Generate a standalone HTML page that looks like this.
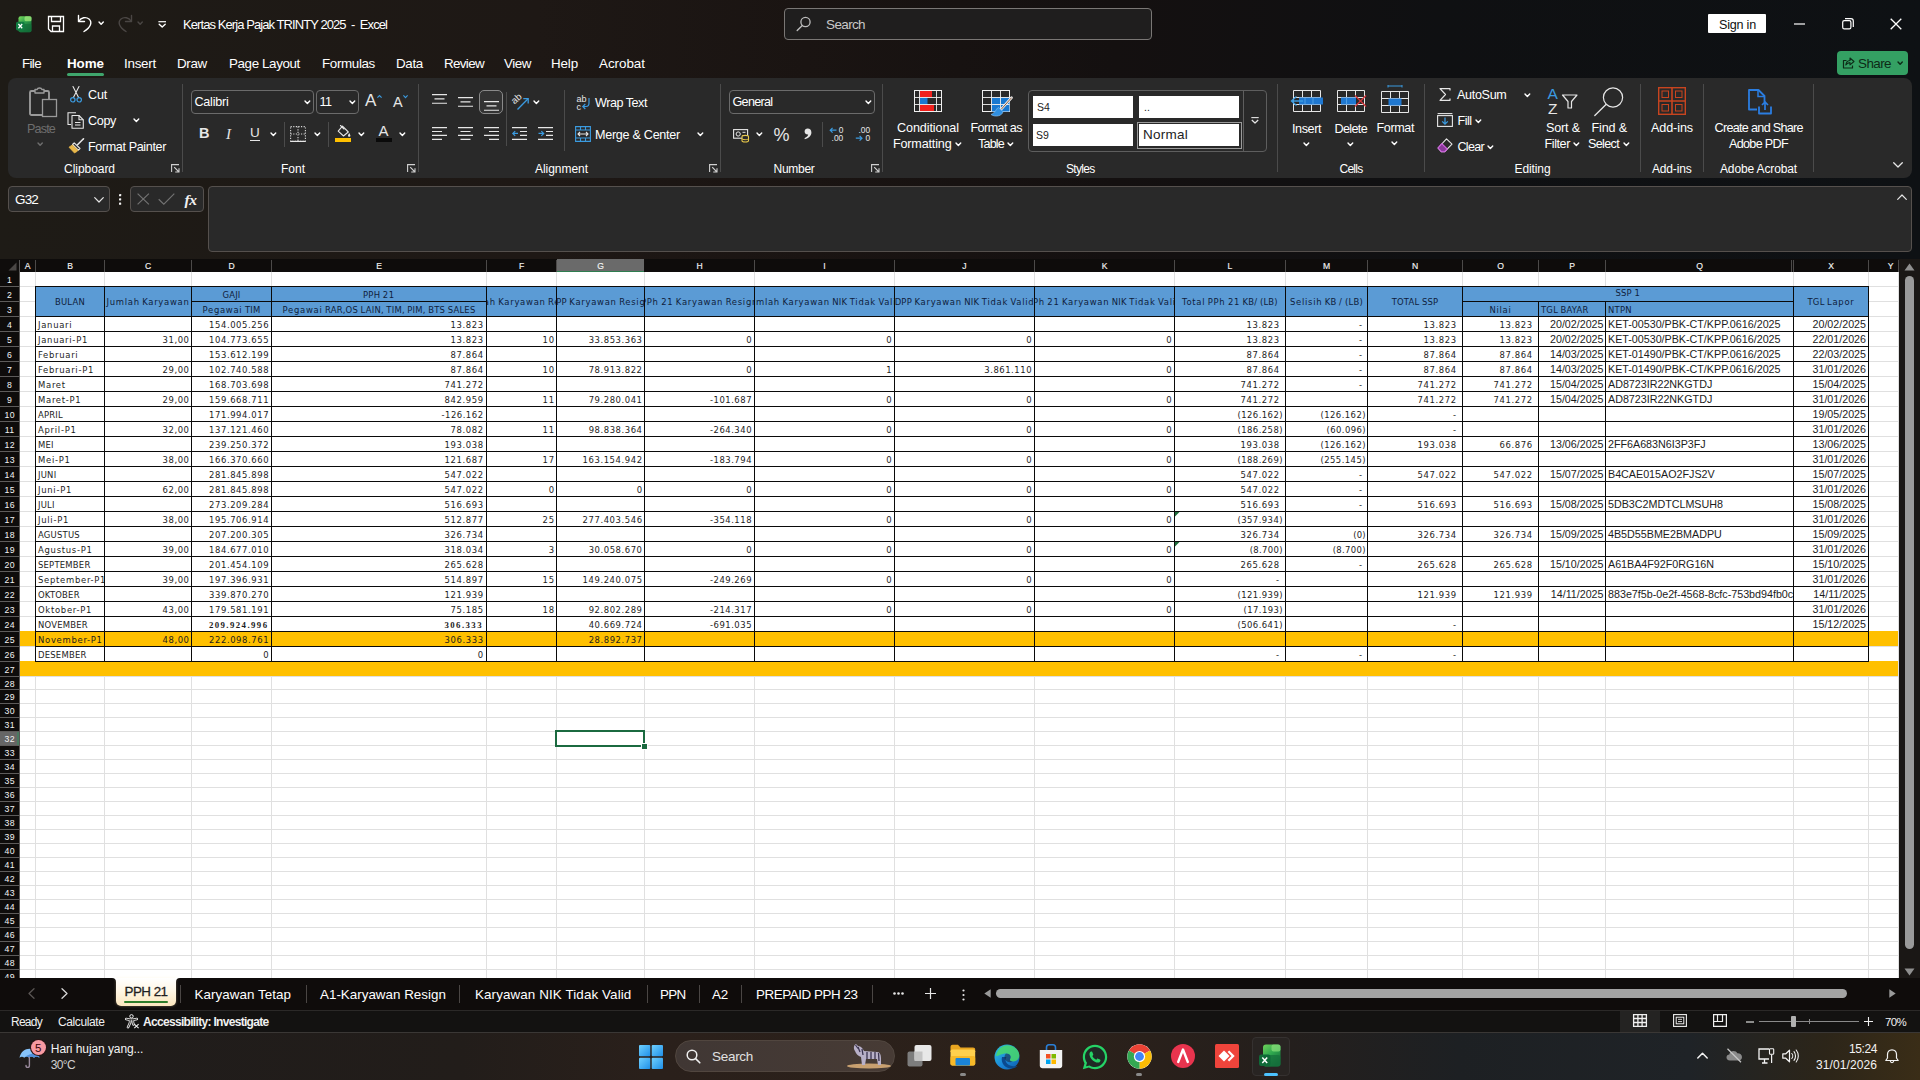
<!DOCTYPE html>
<html lang="id"><head><meta charset="utf-8"><title>Kertas Kerja Pajak TRINTY 2025 - Excel</title>
<style>

html,body{margin:0;padding:0;}
body{width:1920px;height:1080px;overflow:hidden;background:#1e1a17;font-family:"Liberation Sans",sans-serif;color:#fff;}
#app{position:relative;width:1920px;height:1080px;overflow:hidden;background:#1e1a17;}
.abs{position:absolute;}
.t{position:absolute;white-space:pre;line-height:1;color:#fff;}
svg{position:absolute;overflow:visible;}
/* title bar */
#titlebar{position:absolute;left:0;top:0;width:1920px;height:48px;background:#1e1a17;}
#tabsrow{position:absolute;left:0;top:48px;width:1920px;height:30px;}
.tab{position:absolute;top:56px;font-size:14.5px;color:#fff;white-space:nowrap;line-height:16px;}
#ribbon{position:absolute;left:8px;top:78px;width:1904px;height:100px;background:#292929;border-radius:8px;}
.rl{position:absolute;font-size:13px;color:#fff;white-space:nowrap;line-height:14px;}
.gl{position:absolute;font-size:12.5px;color:#fff;white-space:nowrap;line-height:14px;top:161px;}
.sep{position:absolute;width:1px;background:#4a4a4a;top:86px;height:86px;}
.box{position:absolute;border:1px solid #6a6a6a;border-radius:4px;box-sizing:border-box;}
/* grid */
#grid{position:absolute;left:0;top:259px;width:1920px;height:719px;background:#fff;overflow:hidden;}
.ch{position:absolute;top:0;height:13px;background:#0e0c0b;color:#f4f4f4;font-size:8.6px;line-height:14px;text-align:center;-webkit-text-stroke:0.15px #f4f4f4;}
.rh{position:absolute;left:0;width:19px;background:#0e0c0b;color:#f4f4f4;font-size:8.7px;text-align:center;letter-spacing:0.35px;text-indent:0.35px;}
.c{position:absolute;white-space:nowrap;overflow:hidden;font-family:'DejaVu Sans Condensed','Liberation Sans',sans-serif;font-size:10.5px;color:#1a1a1a;box-sizing:border-box;word-spacing:-0.9px;}
.c .u{letter-spacing:0.22px;}.c .p{letter-spacing:-0.19px;}
.vl{position:absolute;width:1px;background:#000;}
.hl{position:absolute;height:1px;background:#000;}
.gv{position:absolute;width:1px;background:#dcdcdc;}
.gh{position:absolute;height:1px;background:#dcdcdc;}

</style></head>
<body>
<div id="app">
<div class="abs" style="left:0;top:0;width:1920px;height:259px;background:linear-gradient(90deg,#1e1b16 0%,#1e1815 28%,#1a1412 42%,#141010 58%,#0f1012 75%,#0e1114 100%);"></div>
<svg style="left:16px;top:15.5px" width="16" height="17" viewBox="0 0 16 17"><defs><linearGradient id="xl" x1="0" y1="0" x2="0.7" y2="1"><stop offset="0" stop-color="#7ddc5c"/><stop offset="0.45" stop-color="#2ea04c"/><stop offset="1" stop-color="#0f6233"/></linearGradient></defs>
<rect x="2.5" y="0.3" width="13" height="16" rx="2" fill="url(#xl)"/>
<rect x="8.5" y="0.3" width="7" height="5" rx="1.5" fill="#a6ec7c" opacity="0.75"/>
<rect x="2.5" y="8" width="13" height="8.3" rx="1.8" fill="#14703a" opacity="0.7"/>
<rect x="0" y="5.8" width="8.6" height="8.6" rx="1.6" fill="#107c41"/>
<path d="M2.4 8 L6.2 12.2 M6.2 8 L2.4 12.2" stroke="#fff" stroke-width="1.3" fill="none"/></svg>
<svg style="left:47px;top:15px" width="18" height="18" viewBox="0 0 18 18"><path d="M1.5 1.5 H16.5 V16.5 H4 L1.5 14 Z" fill="none" stroke="#fff" stroke-width="1.3" stroke-linejoin="miter"/>
<path d="M4.5 1.5 V6.5 H13.5 V1.5 M5.5 16.5 V11 H12.5 V16.5" fill="none" stroke="#fff" stroke-width="1.3"/></svg>
<svg style="left:77px;top:14px" width="16" height="19" viewBox="0 0 16 19"><path d="M1.5 1.5 V7.5 H7.5" fill="none" stroke="#fff" stroke-width="1.4" stroke-linecap="round" stroke-linejoin="round"/>
<path d="M2 7 C4 3.5 9 2.5 12 5 C15.5 8 14 13 7 17.5" fill="none" stroke="#fff" stroke-width="1.4" stroke-linecap="round"/></svg>
<svg style="left:99.3px;top:22.3px" width="4.3" height="2.3400000000000003" viewBox="0 0 4.3 2.3400000000000003"><path d="M0 0 L2.15 2.3400000000000003 L4.3 0" fill="none" stroke="#fff" stroke-width="1.4" stroke-linecap="round" stroke-linejoin="round"/></svg>
<svg style="left:117px;top:14px" width="16" height="19" viewBox="0 0 16 19"><path d="M14.5 1.5 V7.5 H8.5" fill="none" stroke="#4a4644" stroke-width="1.4" stroke-linecap="round" stroke-linejoin="round"/>
<path d="M14 7 C12 3.5 7 2.5 4 5 C0.5 8 2 13 9 17.5" fill="none" stroke="#4a4644" stroke-width="1.4" stroke-linecap="round"/></svg>
<svg style="left:138.3px;top:22.3px" width="4.3" height="2.3400000000000003" viewBox="0 0 4.3 2.3400000000000003"><path d="M0 0 L2.15 2.3400000000000003 L4.3 0" fill="none" stroke="#4a4644" stroke-width="1.4" stroke-linecap="round" stroke-linejoin="round"/></svg>
<svg style="left:158.3px;top:20.8px" width="8.4" height="7" viewBox="0 0 8.4 7"><path d="M0.4 0.7 H8" stroke="#fff" stroke-width="1.2"/><path d="M1.2 3.2 L4.2 6 L7.2 3.2" fill="none" stroke="#fff" stroke-width="1.4" stroke-linejoin="round" stroke-linecap="round"/></svg>
<div class="t" style="left:183.0px;top:17.3px;font-size:13px;line-height:16px;letter-spacing:-0.921px;">Kertas Kerja Pajak TRINTY 2025  -  Excel</div>
<div class="abs" style="left:784px;top:8px;width:368px;height:32px;box-sizing:border-box;border:1px solid #7a7775;border-radius:4px;background:#1f1e1e;"></div>
<svg style="left:796px;top:16px" width="16" height="16" viewBox="0 0 16 16"><circle cx="9.5" cy="6" r="4.6" fill="none" stroke="#bdbdbd" stroke-width="1.3"/><path d="M6.3 9.5 L1.2 14.6" stroke="#bdbdbd" stroke-width="1.4" stroke-linecap="round"/></svg>
<div class="t" style="left:826.0px;top:17.4px;font-size:13.5px;line-height:16px;letter-spacing:-0.629px;color:#c8c8c8;">Search</div>
<div class="abs" style="left:1708px;top:14px;width:58px;height:19px;background:#fff;border-radius:1px;"></div>
<div class="t" style="left:1719.0px;top:17.8px;font-size:12.6px;line-height:15px;letter-spacing:-0.218px;color:#111;">Sign in</div>
<svg style="left:1794px;top:22.5px" width="11" height="2" viewBox="0 0 11 2"><path d="M0 1 H11" stroke="#fff" stroke-width="1.2"/></svg>
<svg style="left:1842px;top:18px" width="12" height="12" viewBox="0 0 12 12"><rect x="0.7" y="2.7" width="8.2" height="8.2" rx="1.6" fill="none" stroke="#fff" stroke-width="1.2"/><path d="M3 0.7 H9 Q11.3 0.7 11.3 3 V9" fill="none" stroke="#fff" stroke-width="1.2"/></svg>
<svg style="left:1890px;top:18px" width="12" height="12" viewBox="0 0 12 12"><path d="M0.7 0.7 L11.3 11.3 M11.3 0.7 L0.7 11.3" stroke="#fff" stroke-width="1.3"/></svg>
<div class="t" style="left:22.0px;top:56.2px;font-size:13.4px;line-height:16px;letter-spacing:-0.648px;">File</div>
<div class="t" style="left:67.0px;top:56.2px;font-size:13.4px;line-height:16px;letter-spacing:-0.058px;font-weight:bold;">Home</div>
<div class="t" style="left:124.0px;top:56.2px;font-size:13.4px;line-height:16px;letter-spacing:-0.252px;">Insert</div>
<div class="t" style="left:177.0px;top:56.2px;font-size:13.4px;line-height:16px;letter-spacing:-0.318px;">Draw</div>
<div class="t" style="left:229.0px;top:56.2px;font-size:13.4px;line-height:16px;letter-spacing:-0.387px;">Page Layout</div>
<div class="t" style="left:322.0px;top:56.2px;font-size:13.4px;line-height:16px;letter-spacing:-0.356px;">Formulas</div>
<div class="t" style="left:396.0px;top:56.2px;font-size:13.4px;line-height:16px;letter-spacing:-0.326px;">Data</div>
<div class="t" style="left:444.0px;top:56.2px;font-size:13.4px;line-height:16px;letter-spacing:-0.656px;">Review</div>
<div class="t" style="left:504.0px;top:56.2px;font-size:13.4px;line-height:16px;letter-spacing:-0.451px;">View</div>
<div class="t" style="left:551.0px;top:56.2px;font-size:13.4px;line-height:16px;letter-spacing:-0.140px;">Help</div>
<div class="t" style="left:599.0px;top:56.2px;font-size:13.4px;line-height:16px;letter-spacing:-0.026px;">Acrobat</div>
<div class="abs" style="left:67px;top:73px;width:37px;height:2.5px;background:#3fa56c;border-radius:1.5px;"></div>
<div class="abs" style="left:1837px;top:51px;width:71px;height:24px;background:#34a063;border-radius:4px;"></div>
<svg style="left:1842px;top:56px" width="13" height="13" viewBox="0 0 13 13"><path d="M4.5 4.5 H1.5 V12 H10.5 V9.5" fill="none" stroke="#0d2a17" stroke-width="1.2" stroke-linejoin="round"/><path d="M3.8 9 C4.2 6 6 4.6 8 4.5 V2 L12 5.5 L8 8.8 V6.6 C6.3 6.6 5 7.3 3.8 9 Z" fill="none" stroke="#0d2a17" stroke-width="1.1" stroke-linejoin="round"/></svg>
<div class="t" style="left:1858.0px;top:56.2px;font-size:13.4px;line-height:16px;letter-spacing:-0.552px;color:#0d2a17;">Share</div>
<svg style="left:1898.3px;top:62.3px" width="4.3" height="2.3400000000000003" viewBox="0 0 4.3 2.3400000000000003"><path d="M0 0 L2.15 2.3400000000000003 L4.3 0" fill="none" stroke="#0d2a17" stroke-width="1.4" stroke-linecap="round" stroke-linejoin="round"/></svg>
<div id="ribbon"></div>
<svg style="left:29px;top:87px" width="29" height="31" viewBox="0 0 29 31"><rect x="1" y="4" width="19" height="24" rx="1.5" fill="none" stroke="#9a9a9a" stroke-width="1.9"/>
<path d="M6 4 V2.5 H8.2 C8.5 0.5 12.5 0.5 12.8 2.5 H15 V6 H6 Z" fill="#292929" stroke="#9a9a9a" stroke-width="1.4" stroke-linejoin="round"/>
<rect x="13.5" y="12.5" width="14" height="17" fill="#292929" stroke="#9a9a9a" stroke-width="1.3"/></svg>
<div class="t" style="left:27.0px;top:122.3px;font-size:12.6px;line-height:15px;letter-spacing:-0.844px;color:#6e6e6e;">Paste</div>
<svg style="left:38.4px;top:143.3px" width="4.3" height="2.3400000000000003" viewBox="0 0 4.3 2.3400000000000003"><path d="M0 0 L2.15 2.3400000000000003 L4.3 0" fill="none" stroke="#6e6e6e" stroke-width="1.4" stroke-linecap="round" stroke-linejoin="round"/></svg>
<svg style="left:70px;top:86px" width="12" height="17" viewBox="0 0 12 17"><path d="M3 0.5 L8.6 11.5 M9 0.5 L3.4 11.5" stroke="#e6e6e6" stroke-width="1.1" stroke-linecap="round"/>
<circle cx="2.8" cy="13.8" r="2.2" fill="none" stroke="#3b9be0" stroke-width="1.2"/><circle cx="9.2" cy="13.8" r="2.2" fill="none" stroke="#3b9be0" stroke-width="1.2"/></svg>
<div class="t" style="left:88.0px;top:88.3px;font-size:12.6px;line-height:15px;letter-spacing:-0.203px;">Cut</div>
<svg style="left:67px;top:112px" width="18" height="17" viewBox="0 0 18 17"><path d="M4 12.5 H1 V0.8 H9" fill="none" stroke="#e6e6e6" stroke-width="1.1"/>
<path d="M5 3.5 H12 L16.3 7.8 V16.2 H5 Z" fill="none" stroke="#e6e6e6" stroke-width="1.1" stroke-linejoin="round"/><path d="M12 3.5 V7.8 H16.3" fill="none" stroke="#e6e6e6" stroke-width="1.1"/>
<path d="M8 10.5 H13.5 M8 13 H13.5" stroke="#e6e6e6" stroke-width="1"/></svg>
<div class="t" style="left:88.0px;top:114.3px;font-size:12.6px;line-height:15px;letter-spacing:-0.354px;">Copy</div>
<svg style="left:133.9px;top:119.2px" width="4.7299999999999995" height="2.52" viewBox="0 0 4.7299999999999995 2.52"><path d="M0 0 L2.3649999999999998 2.52 L4.7299999999999995 0" fill="none" stroke="#fff" stroke-width="1.4" stroke-linecap="round" stroke-linejoin="round"/></svg>
<svg style="left:68px;top:138px" width="17" height="16" viewBox="0 0 17 16"><path d="M15.5 0.8 L9.5 6.8" stroke="#e6e6e6" stroke-width="1.6" stroke-linecap="round"/>
<path d="M6.2 4.8 L12 10.5 L10.3 12.2 L4.5 6.5 Z" fill="#292929" stroke="#e6e6e6" stroke-width="1.1" stroke-linejoin="round"/>
<path d="M4.3 7 L1 9.2 L6.5 15 C8.3 14 9.6 13 10 12.4 Z" fill="#e8b84a" stroke="#e8b84a" stroke-width="0.8" stroke-linejoin="round"/></svg>
<div class="t" style="left:88.0px;top:139.8px;font-size:12.6px;line-height:15px;letter-spacing:-0.381px;">Format Painter</div>
<div class="t" style="left:64.0px;top:161.8px;font-size:12px;line-height:14px;letter-spacing:-0.041px;">Clipboard</div>
<svg style="left:171px;top:164px" width="9" height="9" viewBox="0 0 9 9"><path d="M0.6 8 V0.6 H8" fill="none" stroke="#d0d0d0" stroke-width="1.1"/><path d="M3.2 3.2 L8 8 M8 4.2 V8 H4.2" fill="none" stroke="#d0d0d0" stroke-width="1.1"/></svg>
<div class="abs" style="left:182px;top:84px;width:1px;height:88px;background:#4b4b4b;"></div>
<div class="abs" style="left:191px;top:90px;width:122.5px;height:24px;box-sizing:border-box;border:1px solid #6b6b6b;border-radius:4px;background:#292929;"></div>
<div class="t" style="left:194.5px;top:95.3px;font-size:12.6px;line-height:15px;letter-spacing:-0.244px;">Calibri</div>
<svg style="left:304.6px;top:101.2px" width="4.7299999999999995" height="2.52" viewBox="0 0 4.7299999999999995 2.52"><path d="M0 0 L2.3649999999999998 2.52 L4.7299999999999995 0" fill="none" stroke="#fff" stroke-width="1.4" stroke-linecap="round" stroke-linejoin="round"/></svg>
<div class="abs" style="left:316px;top:90px;width:43px;height:24px;box-sizing:border-box;border:1px solid #6b6b6b;border-radius:4px;background:#292929;"></div>
<div class="t" style="left:319.5px;top:95.3px;font-size:12.6px;line-height:15px;letter-spacing:-0.540px;">11</div>
<svg style="left:349.6px;top:101.2px" width="4.7299999999999995" height="2.52" viewBox="0 0 4.7299999999999995 2.52"><path d="M0 0 L2.3649999999999998 2.52 L4.7299999999999995 0" fill="none" stroke="#fff" stroke-width="1.4" stroke-linecap="round" stroke-linejoin="round"/></svg>
<div class="t" style="left:365.0px;top:91.4px;font-size:17px;line-height:20px;color:#e6e6e6;">A</div>
<svg style="left:376.5px;top:94.5px" width="5" height="3" viewBox="0 0 5 3"><path d="M0.4 2.7 L2.5 0.5 L4.6 2.7" fill="none" stroke="#3b9be0" stroke-width="1.1"/></svg>
<div class="t" style="left:393.0px;top:93.9px;font-size:14.5px;line-height:17px;color:#e6e6e6;">A</div>
<svg style="left:402.5px;top:94.5px" width="5" height="3" viewBox="0 0 5 3"><path d="M0.4 0.4 L2.5 2.6 L4.6 0.4" fill="none" stroke="#3b9be0" stroke-width="1.1"/></svg>
<div class="t" style="left:199.0px;top:125.4px;font-size:14.5px;line-height:17px;color:#e6e6e6;font-weight:bold;">B</div>
<div class="t" style="left:226.0px;top:124.9px;font-size:15px;line-height:18px;color:#e6e6e6;font-style:italic;font-family:'Liberation Serif',serif;">I</div>
<div class="t" style="left:250.0px;top:125.4px;font-size:13.5px;line-height:16px;color:#e6e6e6;">U</div>
<div class="abs" style="left:250px;top:139.5px;width:9.5px;height:1.2px;background:#e6e6e6;"></div>
<svg style="left:271.1px;top:133.2px" width="4.7299999999999995" height="2.52" viewBox="0 0 4.7299999999999995 2.52"><path d="M0 0 L2.3649999999999998 2.52 L4.7299999999999995 0" fill="none" stroke="#fff" stroke-width="1.4" stroke-linecap="round" stroke-linejoin="round"/></svg>
<div class="abs" style="left:284px;top:122px;width:1px;height:25px;background:#4b4b4b;"></div>
<svg style="left:290px;top:126px" width="16" height="16" viewBox="0 0 16 16"><path d="M0.6 0.6 H15.4 V15.4 H0.6 Z M8 0.6 V15.4 M0.6 8 H15.4" fill="none" stroke="#d8d8d8" stroke-width="1.1" stroke-dasharray="1.2 1.4"/>
<path d="M0.6 15.4 H15.4" stroke="#e6e6e6" stroke-width="1.2"/></svg>
<svg style="left:314.6px;top:133.2px" width="4.7299999999999995" height="2.52" viewBox="0 0 4.7299999999999995 2.52"><path d="M0 0 L2.3649999999999998 2.52 L4.7299999999999995 0" fill="none" stroke="#fff" stroke-width="1.4" stroke-linecap="round" stroke-linejoin="round"/></svg>
<div class="abs" style="left:328px;top:122px;width:1px;height:25px;background:#4b4b4b;"></div>
<svg style="left:336px;top:125px" width="15" height="12" viewBox="0 0 15 12"><path d="M6.5 1.2 L12.3 7 L7.5 11 L2.2 6.2 Z" fill="none" stroke="#e6e6e6" stroke-width="1.1" stroke-linejoin="round"/><path d="M4.5 0.5 L8 4" stroke="#e6e6e6" stroke-width="1.1" stroke-linecap="round"/>
<path d="M13.2 8 C13.8 9.2 14.4 10 14.4 10.8 C14.4 12.2 12 12.2 12 10.8 C12 10 12.6 9.2 13.2 8 Z" fill="#e6e6e6"/></svg>
<div class="abs" style="left:335px;top:138px;width:16px;height:4px;background:#ffc000;"></div>
<svg style="left:359.1px;top:133.2px" width="4.7299999999999995" height="2.52" viewBox="0 0 4.7299999999999995 2.52"><path d="M0 0 L2.3649999999999998 2.52 L4.7299999999999995 0" fill="none" stroke="#fff" stroke-width="1.4" stroke-linecap="round" stroke-linejoin="round"/></svg>
<div class="t" style="left:378.5px;top:122.4px;font-size:15px;line-height:18px;color:#e6e6e6;">A</div>
<div class="abs" style="left:376px;top:138px;width:15.5px;height:4px;background:#0a0a0a;"></div>
<svg style="left:400.1px;top:133.2px" width="4.7299999999999995" height="2.52" viewBox="0 0 4.7299999999999995 2.52"><path d="M0 0 L2.3649999999999998 2.52 L4.7299999999999995 0" fill="none" stroke="#fff" stroke-width="1.4" stroke-linecap="round" stroke-linejoin="round"/></svg>
<div class="t" style="left:281.0px;top:161.8px;font-size:12px;line-height:14px;">Font</div>
<svg style="left:407px;top:164px" width="9" height="9" viewBox="0 0 9 9"><path d="M0.6 8 V0.6 H8" fill="none" stroke="#d0d0d0" stroke-width="1.1"/><path d="M3.2 3.2 L8 8 M8 4.2 V8 H4.2" fill="none" stroke="#d0d0d0" stroke-width="1.1"/></svg>
<div class="abs" style="left:418px;top:84px;width:1px;height:88px;background:#4b4b4b;"></div>
<svg style="left:431.5px;top:93.6px" width="16" height="14" viewBox="0 0 16 14"><path d="M0 0.60 H15 M2.5 4.90 H12.5 M0 9.20 H15 " stroke="#e6e6e6" stroke-width="1.15" fill="none"/></svg>
<svg style="left:457.5px;top:97.2px" width="16" height="14" viewBox="0 0 16 14"><path d="M0 0.60 H15 M2.5 4.90 H12.5 M0 9.20 H15 " stroke="#e6e6e6" stroke-width="1.15" fill="none"/></svg>
<div class="abs" style="left:479px;top:90px;width:24px;height:24px;box-sizing:border-box;border:1px solid #8a8a8a;border-radius:5px;background:#333;"></div>
<svg style="left:483.5px;top:100.6px" width="16" height="14" viewBox="0 0 16 14"><path d="M0 0.60 H15 M2.5 4.90 H12.5 M0 9.20 H15 " stroke="#e6e6e6" stroke-width="1.15" fill="none"/></svg>
<div class="abs" style="left:506px;top:92px;width:1px;height:54px;background:#4b4b4b;"></div>
<svg style="left:511.5px;top:93px" width="18" height="18" viewBox="0 0 18 18"><text x="2.5" y="11.5" font-size="9.5" fill="#e6e6e6" font-family="Liberation Sans" transform="rotate(-42 2.5 11.5)">ab</text>
<path d="M5.5 16.5 L15.8 6" stroke="#3b9be0" stroke-width="1.3" fill="none"/><path d="M11.3 5.6 H16.2 V10.5" stroke="#3b9be0" stroke-width="1.3" fill="none"/></svg>
<svg style="left:533.9px;top:101.2px" width="4.7299999999999995" height="2.52" viewBox="0 0 4.7299999999999995 2.52"><path d="M0 0 L2.3649999999999998 2.52 L4.7299999999999995 0" fill="none" stroke="#fff" stroke-width="1.4" stroke-linecap="round" stroke-linejoin="round"/></svg>
<div class="abs" style="left:564px;top:90px;width:1px;height:61px;background:#4b4b4b;"></div>
<svg style="left:576px;top:94px" width="16" height="17" viewBox="0 0 16 17"><text x="0.5" y="7.5" font-size="9" fill="#e6e6e6" font-family="Liberation Sans">ab</text>
<text x="0.5" y="15.5" font-size="9" fill="#e6e6e6" font-family="Liberation Sans">c</text>
<path d="M13 4 V9 Q13 12.5 10 12.5 H7" stroke="#3b9be0" stroke-width="1.2" fill="none"/><path d="M9.3 10 L6.8 12.5 L9.3 15" stroke="#3b9be0" stroke-width="1.2" fill="none"/></svg>
<div class="t" style="left:595.0px;top:95.8px;font-size:12.6px;line-height:15px;letter-spacing:-0.473px;">Wrap Text</div>
<svg style="left:431.5px;top:127.2px" width="16" height="14" viewBox="0 0 16 14"><path d="M0 0.60 H15 M0 4.50 H10 M0 8.40 H15 M0 12.30 H10 " stroke="#e6e6e6" stroke-width="1.15" fill="none"/></svg>
<svg style="left:457.5px;top:127.2px" width="16" height="14" viewBox="0 0 16 14"><path d="M0 0.60 H15 M2.5 4.50 H12.5 M0 8.40 H15 M2.5 12.30 H12.5 " stroke="#e6e6e6" stroke-width="1.15" fill="none"/></svg>
<svg style="left:483.5px;top:127.2px" width="16" height="14" viewBox="0 0 16 14"><path d="M0 0.60 H15 M5 4.50 H15 M0 8.40 H15 M5 12.30 H15 " stroke="#e6e6e6" stroke-width="1.15" fill="none"/></svg>
<svg style="left:512px;top:127.2px" width="16" height="14" viewBox="0 0 16 14"><path d="M0 0.6 H15 M8 4.5 H15 M8 8.4 H15 M0 12.3 H15" stroke="#e6e6e6" stroke-width="1.15"/>
<path d="M6 6.45 H0.8 M3.2 4.05 L0.8 6.45 L3.2 8.85" stroke="#3b9be0" stroke-width="1.2" fill="none"/></svg>
<svg style="left:538px;top:127.2px" width="16" height="14" viewBox="0 0 16 14"><path d="M0 0.6 H15 M8 4.5 H15 M8 8.4 H15 M0 12.3 H15" stroke="#e6e6e6" stroke-width="1.15"/>
<path d="M0.5 6.45 H5.7 M3.3 4.05 L5.7 6.45 L3.3 8.85" stroke="#3b9be0" stroke-width="1.2" fill="none"/></svg>
<svg style="left:575px;top:126px" width="16" height="16" viewBox="0 0 16 16"><path d="M0.6 0.6 H15.4 V15.4 H0.6 Z M0.6 4 H15.4 M0.6 12 H15.4 M5.5 0.6 V4 M10.5 0.6 V4 M5.5 12 V15.4 M10.5 12 V15.4" fill="none" stroke="#3b9be0" stroke-width="1.1"/>
<path d="M3 8 H13 M5 6 L3 8 L5 10 M11 6 L13 8 L11 10" fill="none" stroke="#e6e6e6" stroke-width="1.1"/></svg>
<div class="t" style="left:595.0px;top:127.8px;font-size:12.6px;line-height:15px;letter-spacing:-0.282px;">Merge &amp; Center</div>
<svg style="left:698.1px;top:133.2px" width="4.7299999999999995" height="2.52" viewBox="0 0 4.7299999999999995 2.52"><path d="M0 0 L2.3649999999999998 2.52 L4.7299999999999995 0" fill="none" stroke="#fff" stroke-width="1.4" stroke-linecap="round" stroke-linejoin="round"/></svg>
<div class="t" style="left:535.0px;top:161.8px;font-size:12px;line-height:14px;letter-spacing:-0.040px;">Alignment</div>
<svg style="left:709px;top:164px" width="9" height="9" viewBox="0 0 9 9"><path d="M0.6 8 V0.6 H8" fill="none" stroke="#d0d0d0" stroke-width="1.1"/><path d="M3.2 3.2 L8 8 M8 4.2 V8 H4.2" fill="none" stroke="#d0d0d0" stroke-width="1.1"/></svg>
<div class="abs" style="left:720px;top:84px;width:1px;height:88px;background:#4b4b4b;"></div>
<div class="abs" style="left:729px;top:90px;width:146px;height:24px;box-sizing:border-box;border:1px solid #6b6b6b;border-radius:4px;background:#292929;"></div>
<div class="t" style="left:732.5px;top:95.3px;font-size:12.6px;line-height:15px;letter-spacing:-0.690px;">General</div>
<svg style="left:865.6px;top:101.2px" width="4.7299999999999995" height="2.52" viewBox="0 0 4.7299999999999995 2.52"><path d="M0 0 L2.3649999999999998 2.52 L4.7299999999999995 0" fill="none" stroke="#fff" stroke-width="1.4" stroke-linecap="round" stroke-linejoin="round"/></svg>
<svg style="left:733px;top:128px" width="17" height="15" viewBox="0 0 17 15"><rect x="0.6" y="1.6" width="14" height="8.6" fill="none" stroke="#e6e6e6" stroke-width="1.1"/><circle cx="5.2" cy="6" r="2.1" fill="none" stroke="#e6e6e6" stroke-width="1"/><path d="M9.5 4.3 H12.5 M9.5 7.5 H12.5" stroke="#e6e6e6" stroke-width="1"/>
<path d="M9 8.5 C9 7 15.5 7 15.5 8.5 V12.8 C15.5 14.4 9 14.4 9 12.8 Z" fill="#292929" stroke="#e8c84a" stroke-width="1.1"/><path d="M9 10.6 C9 12 15.5 12 15.5 10.6" fill="none" stroke="#e8c84a" stroke-width="1"/></svg>
<svg style="left:757.1px;top:133.2px" width="4.7299999999999995" height="2.52" viewBox="0 0 4.7299999999999995 2.52"><path d="M0 0 L2.3649999999999998 2.52 L4.7299999999999995 0" fill="none" stroke="#fff" stroke-width="1.4" stroke-linecap="round" stroke-linejoin="round"/></svg>
<div class="t" style="left:773.5px;top:123.9px;font-size:18px;line-height:22px;color:#e6e6e6;">%</div>
<svg style="left:803px;top:128px" width="9" height="12" viewBox="0 0 9 12"><path d="M4.6 0.6 C7 0.6 8.4 2.2 8.4 4.4 C8.4 7.6 5.8 10.2 1.8 11.2 L1.5 10.2 C3.8 9.2 5 8 5.2 6.6 C3.2 6.8 1.6 5.6 1.6 3.6 C1.6 1.8 2.9 0.6 4.6 0.6 Z" fill="#e6e6e6"/></svg>
<div class="abs" style="left:822px;top:122px;width:1px;height:25px;background:#4b4b4b;"></div>
<svg style="left:829px;top:126px" width="17" height="17" viewBox="0 0 17 17"><path d="M7.5 4.2 H1.2 M3.6 1.8 L1.2 4.2 L3.6 6.6" fill="none" stroke="#3b9be0" stroke-width="1.2"/>
<text x="9.8" y="7.2" font-size="8.4" fill="#e6e6e6" font-family="Liberation Sans">0</text><text x="2.6" y="15.4" font-size="8.4" fill="#e6e6e6" font-family="Liberation Sans">.00</text></svg>
<svg style="left:855px;top:126px" width="17" height="17" viewBox="0 0 17 17"><path d="M0.8 12.2 H7 M4.6 9.8 L7 12.2 L4.6 14.6" fill="none" stroke="#3b9be0" stroke-width="1.2"/>
<text x="3.4" y="7.2" font-size="8.4" fill="#e6e6e6" font-family="Liberation Sans">.00</text><text x="10.6" y="15.4" font-size="8.4" fill="#e6e6e6" font-family="Liberation Sans">0</text></svg>
<div class="t" style="left:773.5px;top:161.8px;font-size:12px;line-height:14px;letter-spacing:-0.280px;">Number</div>
<svg style="left:871px;top:164px" width="9" height="9" viewBox="0 0 9 9"><path d="M0.6 8 V0.6 H8" fill="none" stroke="#d0d0d0" stroke-width="1.1"/><path d="M3.2 3.2 L8 8 M8 4.2 V8 H4.2" fill="none" stroke="#d0d0d0" stroke-width="1.1"/></svg>
<div class="abs" style="left:882px;top:84px;width:1px;height:88px;background:#4b4b4b;"></div>
<svg style="left:914px;top:90px" width="28" height="22" viewBox="0 0 28 22"><rect x="0.5" y="0.5" width="27" height="21" fill="#292929" stroke="#f0f0f0" stroke-width="1"/>
<rect x="5.5" y="1" width="12.5" height="6.5" fill="#f0201c"/><rect x="5.5" y="14.5" width="14.5" height="6.5" fill="#f0201c"/><rect x="5.5" y="7.5" width="8" height="7" fill="#1878d0"/>
<path d="M5.5 0.5 V21.5 M22.5 0.5 V21.5 M0.5 7.5 H27.5 M0.5 14.5 H27.5" stroke="#f0f0f0" stroke-width="0.9" fill="none"/></svg>
<div class="t" style="left:897.0px;top:121.3px;font-size:12.6px;line-height:15px;letter-spacing:-0.095px;">Conditional</div>
<div class="t" style="left:893.0px;top:137.3px;font-size:12.6px;line-height:15px;letter-spacing:-0.172px;">Formatting</div>
<svg style="left:956.1px;top:143.2px" width="4.7299999999999995" height="2.52" viewBox="0 0 4.7299999999999995 2.52"><path d="M0 0 L2.3649999999999998 2.52 L4.7299999999999995 0" fill="none" stroke="#fff" stroke-width="1.4" stroke-linecap="round" stroke-linejoin="round"/></svg>
<svg style="left:982px;top:90px" width="31" height="28" viewBox="0 0 31 28"><rect x="0.5" y="0.5" width="27" height="21" fill="#292929" stroke="#f0f0f0" stroke-width="1"/>
<rect x="9.5" y="7.5" width="18" height="14" fill="#1878d0"/>
<path d="M9.5 0.5 V21.5 M18.5 0.5 V21.5 M0.5 7.5 H27.5 M0.5 14.5 H27.5" stroke="#f0f0f0" stroke-width="0.9" fill="none"/>
<path d="M29.6 7.6 L18.5 20" stroke="#f0f0f0" stroke-width="2.6" stroke-linecap="round"/><path d="M29.3 8 L19.5 19" stroke="#7a4a2a" stroke-width="0.9" stroke-linecap="round"/>
<path d="M16.5 17.5 C14 18.5 13.5 23 9 24.5 C13 27.5 20.5 26 21 21.5 Z" fill="#2f8fe0" stroke="#8cc4f4" stroke-width="0.6"/></svg>
<div class="t" style="left:970.5px;top:121.3px;font-size:12.6px;line-height:15px;letter-spacing:-0.579px;">Format as</div>
<div class="t" style="left:978.0px;top:137.3px;font-size:12.6px;line-height:15px;letter-spacing:-0.825px;">Table</div>
<svg style="left:1008.1px;top:143.2px" width="4.7299999999999995" height="2.52" viewBox="0 0 4.7299999999999995 2.52"><path d="M0 0 L2.3649999999999998 2.52 L4.7299999999999995 0" fill="none" stroke="#fff" stroke-width="1.4" stroke-linecap="round" stroke-linejoin="round"/></svg>
<div class="abs" style="left:1028px;top:90px;width:239px;height:62px;box-sizing:border-box;border:1px solid #5e5e5e;border-radius:4px;"></div>
<div class="abs" style="left:1243px;top:90px;width:1px;height:62px;background:#5e5e5e;"></div>
<div class="abs" style="left:1033px;top:96px;width:100px;height:22px;background:#fff;"></div>
<div class="abs" style="left:1139px;top:96px;width:100px;height:22px;background:#fff;"></div>
<div class="abs" style="left:1033px;top:124px;width:100px;height:22px;background:#fff;"></div>
<div class="abs" style="left:1136.5px;top:121.5px;width:105.5px;height:27px;box-sizing:border-box;border:1px solid #9a9a9a;background:#292929;"></div>
<div class="abs" style="left:1139px;top:124px;width:100px;height:22px;background:#fff;"></div>
<div class="t" style="left:1037.0px;top:101.3px;font-size:10.5px;line-height:13px;color:#222;">S4</div>
<div class="t" style="left:1036.0px;top:129.3px;font-size:10.5px;line-height:13px;color:#222;">S9</div>
<div class="t" style="left:1144.0px;top:101.3px;font-size:10.5px;line-height:13px;color:#222;">..</div>
<div class="t" style="left:1143.0px;top:127.4px;font-size:13.5px;line-height:16px;letter-spacing:0.249px;color:#222;">Normal</div>
<svg style="left:1250.5px;top:117px" width="8" height="7" viewBox="0 0 8 7"><path d="M0.3 0.6 H7.7" stroke="#e6e6e6" stroke-width="1.1"/><path d="M0.8 3 L4 6 L7.2 3" fill="none" stroke="#e6e6e6" stroke-width="1.2" stroke-linejoin="round"/></svg>
<div class="t" style="left:1066.0px;top:161.8px;font-size:12px;line-height:14px;letter-spacing:-0.696px;">Styles</div>
<div class="abs" style="left:1277px;top:84px;width:1px;height:88px;background:#4b4b4b;"></div>
<svg style="left:1293px;top:90px" width="30" height="22" viewBox="0 0 30 22"><path d="M0.5 0.5 H27.5 V21.5 H0.5 Z M0.5 7.5 H27.5 M0.5 14.5 H27.5 M9.5 0.5 V21.5 M18.5 0.5 V21.5" fill="none" stroke="#e6e6e6" stroke-width="1"/>
<rect x="6" y="7.5" width="24" height="7" fill="#1f78d1"/><path d="M12 7.5 V14.5 M20 7.5 V14.5" stroke="#5aa9ea" stroke-width="0.8"/>
<path d="M10 11 H-1.5 M3.5 6.5 L-1.5 11 L3.5 15.5" fill="none" stroke="#3b9be0" stroke-width="1.4"/></svg>
<div class="t" style="left:1292.0px;top:122.3px;font-size:12.6px;line-height:15px;letter-spacing:-0.419px;">Insert</div>
<svg style="left:1304.1px;top:143.2px" width="4.7299999999999995" height="2.52" viewBox="0 0 4.7299999999999995 2.52"><path d="M0 0 L2.3649999999999998 2.52 L4.7299999999999995 0" fill="none" stroke="#fff" stroke-width="1.4" stroke-linecap="round" stroke-linejoin="round"/></svg>
<svg style="left:1337px;top:90px" width="30" height="22" viewBox="0 0 30 22"><path d="M0.5 0.5 H27.5 V21.5 H0.5 Z M0.5 7.5 H27.5 M0.5 14.5 H27.5 M9.5 0.5 V21.5 M18.5 0.5 V21.5" fill="none" stroke="#e6e6e6" stroke-width="1"/>
<rect x="4" y="7.5" width="15" height="7" fill="#1f78d1"/><path d="M9.5 7.5 V14.5" stroke="#5aa9ea" stroke-width="0.8"/>
<path d="M18 5.5 L29 16.5 M29 5.5 L18 16.5" fill="none" stroke="#d13438" stroke-width="1.4"/></svg>
<div class="t" style="left:1334.5px;top:122.3px;font-size:12.6px;line-height:15px;letter-spacing:-0.654px;">Delete</div>
<svg style="left:1348.1px;top:143.2px" width="4.7299999999999995" height="2.52" viewBox="0 0 4.7299999999999995 2.52"><path d="M0 0 L2.3649999999999998 2.52 L4.7299999999999995 0" fill="none" stroke="#fff" stroke-width="1.4" stroke-linecap="round" stroke-linejoin="round"/></svg>
<svg style="left:1381px;top:84.5px" width="28" height="28" viewBox="0 0 28 28"><g transform="translate(0,6)"><path d="M0.5 0.5 H27.5 V21.5 H0.5 Z M0.5 7.5 H27.5 M0.5 14.5 H27.5 M9.5 0.5 V21.5 M18.5 0.5 V21.5" fill="none" stroke="#e6e6e6" stroke-width="1"/><rect x="7.5" y="7.5" width="13" height="7" fill="#1f78d1"/></g>
<path d="M7 1 H21 M7 0 V2.5 M21 0 V2.5" stroke="#3b9be0" stroke-width="1" fill="none"/></svg>
<div class="t" style="left:1376.5px;top:121.3px;font-size:12.6px;line-height:15px;letter-spacing:-0.401px;">Format</div>
<svg style="left:1392.1px;top:142.2px" width="4.7299999999999995" height="2.52" viewBox="0 0 4.7299999999999995 2.52"><path d="M0 0 L2.3649999999999998 2.52 L4.7299999999999995 0" fill="none" stroke="#fff" stroke-width="1.4" stroke-linecap="round" stroke-linejoin="round"/></svg>
<div class="t" style="left:1339.5px;top:161.8px;font-size:12px;line-height:14px;letter-spacing:-0.735px;">Cells</div>
<div class="abs" style="left:1424px;top:84px;width:1px;height:88px;background:#4b4b4b;"></div>
<svg style="left:1439px;top:88px" width="12" height="13" viewBox="0 0 12 13"><path d="M11 2.5 V0.7 H1 L6.5 6.5 L1 12.3 H11 V10.5" fill="none" stroke="#e6e6e6" stroke-width="1.2" stroke-linejoin="round"/></svg>
<div class="t" style="left:1457.0px;top:88.3px;font-size:12.6px;line-height:15px;letter-spacing:-0.333px;">AutoSum</div>
<svg style="left:1525.1px;top:93.7px" width="4.7299999999999995" height="2.52" viewBox="0 0 4.7299999999999995 2.52"><path d="M0 0 L2.3649999999999998 2.52 L4.7299999999999995 0" fill="none" stroke="#fff" stroke-width="1.4" stroke-linecap="round" stroke-linejoin="round"/></svg>
<svg style="left:1437px;top:113px" width="16" height="14" viewBox="0 0 16 14"><path d="M0.6 0.6 H15.4" stroke="#e6e6e6" stroke-width="1.1"/><rect x="0.6" y="2.6" width="14.8" height="10.8" fill="none" stroke="#e6e6e6" stroke-width="1.1"/><path d="M8 4.5 V11 M5.2 8.4 L8 11.2 L10.8 8.4" fill="none" stroke="#3b9be0" stroke-width="1.3"/></svg>
<div class="t" style="left:1457.5px;top:114.3px;font-size:12.6px;line-height:15px;letter-spacing:-0.524px;">Fill</div>
<svg style="left:1476.1px;top:120.2px" width="4.7299999999999995" height="2.52" viewBox="0 0 4.7299999999999995 2.52"><path d="M0 0 L2.3649999999999998 2.52 L4.7299999999999995 0" fill="none" stroke="#fff" stroke-width="1.4" stroke-linecap="round" stroke-linejoin="round"/></svg>
<svg style="left:1437px;top:138px" width="16" height="15" viewBox="0 0 16 15"><path d="M9.5 0.8 L15 6.2 L7.5 13.8 H4.5 L1 10 Z" fill="none" stroke="#e6e6e6" stroke-width="1.1" stroke-linejoin="round"/><path d="M4.8 5.6 L10.2 11 L7.5 13.8 H4.5 L1 10 Z" fill="#8a3a9a" stroke="#d060e0" stroke-width="1.1" stroke-linejoin="round"/></svg>
<div class="t" style="left:1457.5px;top:139.8px;font-size:12.6px;line-height:15px;letter-spacing:-0.722px;">Clear</div>
<svg style="left:1488.1px;top:145.7px" width="4.7299999999999995" height="2.52" viewBox="0 0 4.7299999999999995 2.52"><path d="M0 0 L2.3649999999999998 2.52 L4.7299999999999995 0" fill="none" stroke="#fff" stroke-width="1.4" stroke-linecap="round" stroke-linejoin="round"/></svg>
<svg style="left:1548px;top:87px" width="30" height="28" viewBox="0 0 30 28"><text x="-0.5" y="12.3" font-size="15.5" fill="#3b9be0" font-family="Liberation Sans">A</text><text x="0" y="27.3" font-size="15.5" fill="#e6e6e6" font-family="Liberation Sans">Z</text>
<path d="M14.5 8 H29 L23.5 14.5 V21 H20 V14.5 Z" fill="none" stroke="#e6e6e6" stroke-width="1.2" stroke-linejoin="round"/></svg>
<div class="t" style="left:1546.0px;top:121.3px;font-size:12.6px;line-height:15px;letter-spacing:-0.169px;">Sort &amp;</div>
<div class="t" style="left:1544.5px;top:137.3px;font-size:12.6px;line-height:15px;letter-spacing:-0.417px;">Filter</div>
<svg style="left:1574.1px;top:143.2px" width="4.7299999999999995" height="2.52" viewBox="0 0 4.7299999999999995 2.52"><path d="M0 0 L2.3649999999999998 2.52 L4.7299999999999995 0" fill="none" stroke="#fff" stroke-width="1.4" stroke-linecap="round" stroke-linejoin="round"/></svg>
<svg style="left:1594px;top:87px" width="30" height="30" viewBox="0 0 30 30"><circle cx="19" cy="10.5" r="9.6" fill="none" stroke="#e6e6e6" stroke-width="1.2"/><path d="M12 17.5 L0.8 28.5" stroke="#e6e6e6" stroke-width="1.3" stroke-linecap="round"/></svg>
<div class="t" style="left:1591.5px;top:121.3px;font-size:12.6px;line-height:15px;letter-spacing:-0.153px;">Find &amp;</div>
<div class="t" style="left:1588.0px;top:137.3px;font-size:12.6px;line-height:15px;letter-spacing:-0.670px;">Select</div>
<svg style="left:1623.6px;top:143.2px" width="4.7299999999999995" height="2.52" viewBox="0 0 4.7299999999999995 2.52"><path d="M0 0 L2.3649999999999998 2.52 L4.7299999999999995 0" fill="none" stroke="#fff" stroke-width="1.4" stroke-linecap="round" stroke-linejoin="round"/></svg>
<div class="t" style="left:1514.5px;top:161.8px;font-size:12px;line-height:14px;letter-spacing:-0.099px;">Editing</div>
<div class="abs" style="left:1640px;top:84px;width:1px;height:88px;background:#4b4b4b;"></div>
<svg style="left:1658px;top:87px" width="28" height="28" viewBox="0 0 28 28"><rect x="0.7" y="0.7" width="26.6" height="26.6" fill="none" stroke="#c8441f" stroke-width="1.4"/><path d="M14 0.7 V27.3 M0.7 14 H27.3" stroke="#c8441f" stroke-width="1.6"/>
<rect x="4" y="4" width="6.5" height="6.5" fill="none" stroke="#c8441f" stroke-width="1"/><rect x="17.5" y="4" width="6.5" height="6.5" fill="none" stroke="#c8441f" stroke-width="1"/><rect x="4" y="17.5" width="6.5" height="6.5" fill="none" stroke="#c8441f" stroke-width="1"/><rect x="17.5" y="17.5" width="6.5" height="6.5" fill="none" stroke="#c8441f" stroke-width="1"/></svg>
<div class="t" style="left:1651.0px;top:121.3px;font-size:12.6px;line-height:15px;letter-spacing:-0.103px;">Add-ins</div>
<div class="t" style="left:1652.0px;top:161.8px;font-size:12px;line-height:14px;letter-spacing:-0.170px;">Add-ins</div>
<div class="abs" style="left:1703px;top:84px;width:1px;height:88px;background:#4b4b4b;"></div>
<svg style="left:1748px;top:89px" width="25" height="26" viewBox="0 0 25 26"><path d="M9 20.5 H1 V1 H10.5 L16.5 7 V13" fill="none" stroke="#2b7de0" stroke-width="1.8" stroke-linejoin="round"/><path d="M10 1 V7.5 H16.5" fill="none" stroke="#2b7de0" stroke-width="1.5"/>
<path d="M11 17.5 V24.5 H23 V17.5" fill="none" stroke="#2b7de0" stroke-width="1.8" stroke-linejoin="round"/><path d="M17 21 V13.5 M14 16 L17 13 L20 16" fill="none" stroke="#2b7de0" stroke-width="1.7"/></svg>
<div class="t" style="left:1714.5px;top:121.3px;font-size:12.6px;line-height:15px;letter-spacing:-0.686px;">Create and Share</div>
<div class="t" style="left:1729.0px;top:136.8px;font-size:12.6px;line-height:15px;letter-spacing:-0.682px;">Adobe PDF</div>
<div class="t" style="left:1720.0px;top:161.8px;font-size:12px;line-height:14px;letter-spacing:-0.133px;">Adobe Acrobat</div>
<div class="abs" style="left:1813px;top:84px;width:1px;height:88px;background:#4b4b4b;"></div>
<svg style="left:1893px;top:162px" width="10" height="6" viewBox="0 0 10 6"><path d="M0.7 0.7 L5 5 L9.3 0.7" fill="none" stroke="#e6e6e6" stroke-width="1.3" stroke-linecap="round" stroke-linejoin="round"/></svg>
<div class="abs" style="left:8px;top:186px;width:102px;height:26px;box-sizing:border-box;border:1px solid #55504d;border-radius:4px;background:#292929;"></div>
<div class="t" style="left:15.0px;top:192.4px;font-size:13.5px;line-height:16px;letter-spacing:-0.839px;">G32</div>
<svg style="left:94px;top:197px" width="10" height="6" viewBox="0 0 10 6"><path d="M0.7 0.7 L5 5 L9.3 0.7" fill="none" stroke="#e6e6e6" stroke-width="1.2" stroke-linecap="round" stroke-linejoin="round"/></svg>
<svg style="left:119px;top:194px" width="2.2" height="11" viewBox="0 0 2.2 11"><rect x="0" y="0" width="2.2" height="2.2" rx="0.5" fill="#f0f0f0"/><rect x="0" y="4.3" width="2.2" height="2.2" rx="0.5" fill="#f0f0f0"/><rect x="0" y="8.6" width="2.2" height="2.2" rx="0.5" fill="#f0f0f0"/></svg>
<div class="abs" style="left:130px;top:186px;width:74px;height:26px;box-sizing:border-box;border:1px solid #55504d;border-radius:4px;background:#292929;"></div>
<svg style="left:137px;top:193px" width="12.5" height="12" viewBox="0 0 12.5 12"><path d="M0.6 0.6 L11.9 11.4 M11.9 0.6 L0.6 11.4" stroke="#727272" stroke-width="1.2"/></svg>
<svg style="left:158px;top:193px" width="17" height="12" viewBox="0 0 17 12"><path d="M0.7 6.3 L5.8 11.2 L16.3 0.7" fill="none" stroke="#727272" stroke-width="1.2"/></svg>
<div class="t" style="left:184.5px;top:189.9px;font-size:15.5px;line-height:19px;color:#f0f0f0;font-weight:bold;font-style:italic;font-family:'Liberation Serif',serif;letter-spacing:-0.3px;">fx</div>
<div class="abs" style="left:208px;top:186px;width:1704px;height:65.5px;box-sizing:border-box;border:1px solid #55504d;border-radius:4px;background:#292929;"></div>
<svg style="left:1897px;top:193.5px" width="10" height="6" viewBox="0 0 10 6"><path d="M0.7 5.3 L5 1 L9.3 5.3" fill="none" stroke="#e6e6e6" stroke-width="1.2" stroke-linecap="round" stroke-linejoin="round"/></svg>
<div class="abs" style="left:0;top:259px;width:1920px;height:719px;background:#fff;"></div>
<div class="abs" style="left:0;top:259px;width:1920px;height:13px;background:#0f0d0c;"></div>
<div class="abs" style="left:0;top:259px;width:20px;height:719px;background:#0f0d0c;"></div>
<div class="abs" style="left:1898px;top:259px;width:22px;height:719px;background:#1a1715;"></div>
<div class="abs" style="left:35px;top:272px;width:1px;height:706px;background:#e0e0e0;"></div>
<div class="abs" style="left:104px;top:272px;width:1px;height:706px;background:#e0e0e0;"></div>
<div class="abs" style="left:191px;top:272px;width:1px;height:706px;background:#e0e0e0;"></div>
<div class="abs" style="left:271px;top:272px;width:1px;height:706px;background:#e0e0e0;"></div>
<div class="abs" style="left:486px;top:272px;width:1px;height:706px;background:#e0e0e0;"></div>
<div class="abs" style="left:556px;top:272px;width:1px;height:706px;background:#e0e0e0;"></div>
<div class="abs" style="left:644px;top:272px;width:1px;height:706px;background:#e0e0e0;"></div>
<div class="abs" style="left:754px;top:272px;width:1px;height:706px;background:#e0e0e0;"></div>
<div class="abs" style="left:894px;top:272px;width:1px;height:706px;background:#e0e0e0;"></div>
<div class="abs" style="left:1034px;top:272px;width:1px;height:706px;background:#e0e0e0;"></div>
<div class="abs" style="left:1174px;top:272px;width:1px;height:706px;background:#e0e0e0;"></div>
<div class="abs" style="left:1285px;top:272px;width:1px;height:706px;background:#e0e0e0;"></div>
<div class="abs" style="left:1367px;top:272px;width:1px;height:706px;background:#e0e0e0;"></div>
<div class="abs" style="left:1462px;top:272px;width:1px;height:706px;background:#e0e0e0;"></div>
<div class="abs" style="left:1538px;top:272px;width:1px;height:706px;background:#e0e0e0;"></div>
<div class="abs" style="left:1605px;top:272px;width:1px;height:706px;background:#e0e0e0;"></div>
<div class="abs" style="left:1793px;top:272px;width:1px;height:706px;background:#e0e0e0;"></div>
<div class="abs" style="left:1868px;top:272px;width:1px;height:706px;background:#e0e0e0;"></div>
<div class="abs" style="left:1898px;top:272px;width:1px;height:706px;background:#e0e0e0;"></div>
<div class="abs" style="left:20px;top:286px;width:1878px;height:1px;background:#e0e0e0;"></div>
<div class="abs" style="left:20px;top:301px;width:1878px;height:1px;background:#e0e0e0;"></div>
<div class="abs" style="left:20px;top:316px;width:1878px;height:1px;background:#e0e0e0;"></div>
<div class="abs" style="left:20px;top:331px;width:1878px;height:1px;background:#e0e0e0;"></div>
<div class="abs" style="left:20px;top:346px;width:1878px;height:1px;background:#e0e0e0;"></div>
<div class="abs" style="left:20px;top:361px;width:1878px;height:1px;background:#e0e0e0;"></div>
<div class="abs" style="left:20px;top:376px;width:1878px;height:1px;background:#e0e0e0;"></div>
<div class="abs" style="left:20px;top:391px;width:1878px;height:1px;background:#e0e0e0;"></div>
<div class="abs" style="left:20px;top:406px;width:1878px;height:1px;background:#e0e0e0;"></div>
<div class="abs" style="left:20px;top:421px;width:1878px;height:1px;background:#e0e0e0;"></div>
<div class="abs" style="left:20px;top:436px;width:1878px;height:1px;background:#e0e0e0;"></div>
<div class="abs" style="left:20px;top:451px;width:1878px;height:1px;background:#e0e0e0;"></div>
<div class="abs" style="left:20px;top:466px;width:1878px;height:1px;background:#e0e0e0;"></div>
<div class="abs" style="left:20px;top:481px;width:1878px;height:1px;background:#e0e0e0;"></div>
<div class="abs" style="left:20px;top:496px;width:1878px;height:1px;background:#e0e0e0;"></div>
<div class="abs" style="left:20px;top:511px;width:1878px;height:1px;background:#e0e0e0;"></div>
<div class="abs" style="left:20px;top:526px;width:1878px;height:1px;background:#e0e0e0;"></div>
<div class="abs" style="left:20px;top:541px;width:1878px;height:1px;background:#e0e0e0;"></div>
<div class="abs" style="left:20px;top:556px;width:1878px;height:1px;background:#e0e0e0;"></div>
<div class="abs" style="left:20px;top:571px;width:1878px;height:1px;background:#e0e0e0;"></div>
<div class="abs" style="left:20px;top:586px;width:1878px;height:1px;background:#e0e0e0;"></div>
<div class="abs" style="left:20px;top:601px;width:1878px;height:1px;background:#e0e0e0;"></div>
<div class="abs" style="left:20px;top:616px;width:1878px;height:1px;background:#e0e0e0;"></div>
<div class="abs" style="left:20px;top:631px;width:1878px;height:1px;background:#e0e0e0;"></div>
<div class="abs" style="left:20px;top:646px;width:1878px;height:1px;background:#e0e0e0;"></div>
<div class="abs" style="left:20px;top:661px;width:1878px;height:1px;background:#e0e0e0;"></div>
<div class="abs" style="left:20px;top:676px;width:1878px;height:1px;background:#e0e0e0;"></div>
<div class="abs" style="left:20px;top:689px;width:1878px;height:1px;background:#e0e0e0;"></div>
<div class="abs" style="left:20px;top:703px;width:1878px;height:1px;background:#e0e0e0;"></div>
<div class="abs" style="left:20px;top:717px;width:1878px;height:1px;background:#e0e0e0;"></div>
<div class="abs" style="left:20px;top:731px;width:1878px;height:1px;background:#e0e0e0;"></div>
<div class="abs" style="left:20px;top:745px;width:1878px;height:1px;background:#e0e0e0;"></div>
<div class="abs" style="left:20px;top:759px;width:1878px;height:1px;background:#e0e0e0;"></div>
<div class="abs" style="left:20px;top:773px;width:1878px;height:1px;background:#e0e0e0;"></div>
<div class="abs" style="left:20px;top:787px;width:1878px;height:1px;background:#e0e0e0;"></div>
<div class="abs" style="left:20px;top:801px;width:1878px;height:1px;background:#e0e0e0;"></div>
<div class="abs" style="left:20px;top:815px;width:1878px;height:1px;background:#e0e0e0;"></div>
<div class="abs" style="left:20px;top:829px;width:1878px;height:1px;background:#e0e0e0;"></div>
<div class="abs" style="left:20px;top:843px;width:1878px;height:1px;background:#e0e0e0;"></div>
<div class="abs" style="left:20px;top:857px;width:1878px;height:1px;background:#e0e0e0;"></div>
<div class="abs" style="left:20px;top:871px;width:1878px;height:1px;background:#e0e0e0;"></div>
<div class="abs" style="left:20px;top:885px;width:1878px;height:1px;background:#e0e0e0;"></div>
<div class="abs" style="left:20px;top:899px;width:1878px;height:1px;background:#e0e0e0;"></div>
<div class="abs" style="left:20px;top:913px;width:1878px;height:1px;background:#e0e0e0;"></div>
<div class="abs" style="left:20px;top:927px;width:1878px;height:1px;background:#e0e0e0;"></div>
<div class="abs" style="left:20px;top:941px;width:1878px;height:1px;background:#e0e0e0;"></div>
<div class="abs" style="left:20px;top:955px;width:1878px;height:1px;background:#e0e0e0;"></div>
<div class="abs" style="left:20px;top:969px;width:1878px;height:1px;background:#e0e0e0;"></div>
<div class="abs" style="left:20px;top:631px;width:1878px;height:15px;background:#ffc000;"></div>
<div class="abs" style="left:20px;top:661px;width:1878px;height:15px;background:#ffc000;"></div>
<div class="ch" style="left:20px;width:15px;top:259px;">A</div>
<div class="abs" style="left:35px;top:260px;width:1px;height:12px;background:#4c4a49;"></div>
<div class="ch" style="left:36px;width:68px;top:259px;">B</div>
<div class="abs" style="left:104px;top:260px;width:1px;height:12px;background:#4c4a49;"></div>
<div class="ch" style="left:105px;width:86px;top:259px;">C</div>
<div class="abs" style="left:191px;top:260px;width:1px;height:12px;background:#4c4a49;"></div>
<div class="ch" style="left:192px;width:79px;top:259px;">D</div>
<div class="abs" style="left:271px;top:260px;width:1px;height:12px;background:#4c4a49;"></div>
<div class="ch" style="left:272px;width:214px;top:259px;">E</div>
<div class="abs" style="left:486px;top:260px;width:1px;height:12px;background:#4c4a49;"></div>
<div class="ch" style="left:487px;width:69px;top:259px;">F</div>
<div class="abs" style="left:556px;top:260px;width:1px;height:12px;background:#4c4a49;"></div>
<div class="ch" style="left:557px;width:87px;top:259px;background:#6a6a6a;border-bottom:1.5px solid #2e7d4f;height:11.5px;color:#f4f4f4;">G</div>
<div class="ch" style="left:645px;width:109px;top:259px;">H</div>
<div class="abs" style="left:754px;top:260px;width:1px;height:12px;background:#4c4a49;"></div>
<div class="ch" style="left:755px;width:139px;top:259px;">I</div>
<div class="abs" style="left:894px;top:260px;width:1px;height:12px;background:#4c4a49;"></div>
<div class="ch" style="left:895px;width:139px;top:259px;">J</div>
<div class="abs" style="left:1034px;top:260px;width:1px;height:12px;background:#4c4a49;"></div>
<div class="ch" style="left:1035px;width:139px;top:259px;">K</div>
<div class="abs" style="left:1174px;top:260px;width:1px;height:12px;background:#4c4a49;"></div>
<div class="ch" style="left:1175px;width:110px;top:259px;">L</div>
<div class="abs" style="left:1285px;top:260px;width:1px;height:12px;background:#4c4a49;"></div>
<div class="ch" style="left:1286px;width:81px;top:259px;">M</div>
<div class="abs" style="left:1367px;top:260px;width:1px;height:12px;background:#4c4a49;"></div>
<div class="ch" style="left:1368px;width:94px;top:259px;">N</div>
<div class="abs" style="left:1462px;top:260px;width:1px;height:12px;background:#4c4a49;"></div>
<div class="ch" style="left:1463px;width:75px;top:259px;">O</div>
<div class="abs" style="left:1538px;top:260px;width:1px;height:12px;background:#4c4a49;"></div>
<div class="ch" style="left:1539px;width:66px;top:259px;">P</div>
<div class="abs" style="left:1605px;top:260px;width:1px;height:12px;background:#4c4a49;"></div>
<div class="ch" style="left:1606px;width:187px;top:259px;">Q</div>
<div class="abs" style="left:1793px;top:260px;width:1px;height:12px;background:#4c4a49;"></div>
<div class="ch" style="left:1794px;width:74px;top:259px;">X</div>
<div class="abs" style="left:1868px;top:260px;width:1px;height:12px;background:#4c4a49;"></div>
<div class="ch" style="left:1869px;width:29px;top:259px;padding-left:14px;box-sizing:border-box;overflow:hidden;">Y</div>
<div class="abs" style="left:1898px;top:260px;width:1px;height:12px;background:#4c4a49;"></div>
<div class="abs" style="left:1791px;top:260px;width:1px;height:12px;background:#4c4a49;"></div>
<div class="abs" style="left:19px;top:260px;width:1px;height:718px;background:#5a5857;"></div>
<svg style="left:8px;top:262px" width="9" height="9" viewBox="0 0 9 9"><path d="M8.5 0.5 V8.5 H0.5 Z" fill="#4a4745"/></svg>
<div class="rh" style="top:273px;height:13px;line-height:15px;">1</div>
<div class="abs" style="left:0;top:286px;width:19px;height:1px;background:#5e5c5b;"></div>
<div class="rh" style="top:287px;height:14px;line-height:16px;">2</div>
<div class="abs" style="left:0;top:301px;width:19px;height:1px;background:#5e5c5b;"></div>
<div class="rh" style="top:302px;height:14px;line-height:16px;">3</div>
<div class="abs" style="left:0;top:316px;width:19px;height:1px;background:#5e5c5b;"></div>
<div class="rh" style="top:317px;height:14px;line-height:16px;">4</div>
<div class="abs" style="left:0;top:331px;width:19px;height:1px;background:#5e5c5b;"></div>
<div class="rh" style="top:332px;height:14px;line-height:16px;">5</div>
<div class="abs" style="left:0;top:346px;width:19px;height:1px;background:#5e5c5b;"></div>
<div class="rh" style="top:347px;height:14px;line-height:16px;">6</div>
<div class="abs" style="left:0;top:361px;width:19px;height:1px;background:#5e5c5b;"></div>
<div class="rh" style="top:362px;height:14px;line-height:16px;">7</div>
<div class="abs" style="left:0;top:376px;width:19px;height:1px;background:#5e5c5b;"></div>
<div class="rh" style="top:377px;height:14px;line-height:16px;">8</div>
<div class="abs" style="left:0;top:391px;width:19px;height:1px;background:#5e5c5b;"></div>
<div class="rh" style="top:392px;height:14px;line-height:16px;">9</div>
<div class="abs" style="left:0;top:406px;width:19px;height:1px;background:#5e5c5b;"></div>
<div class="rh" style="top:407px;height:14px;line-height:16px;">10</div>
<div class="abs" style="left:0;top:421px;width:19px;height:1px;background:#5e5c5b;"></div>
<div class="rh" style="top:422px;height:14px;line-height:16px;">11</div>
<div class="abs" style="left:0;top:436px;width:19px;height:1px;background:#5e5c5b;"></div>
<div class="rh" style="top:437px;height:14px;line-height:16px;">12</div>
<div class="abs" style="left:0;top:451px;width:19px;height:1px;background:#5e5c5b;"></div>
<div class="rh" style="top:452px;height:14px;line-height:16px;">13</div>
<div class="abs" style="left:0;top:466px;width:19px;height:1px;background:#5e5c5b;"></div>
<div class="rh" style="top:467px;height:14px;line-height:16px;">14</div>
<div class="abs" style="left:0;top:481px;width:19px;height:1px;background:#5e5c5b;"></div>
<div class="rh" style="top:482px;height:14px;line-height:16px;">15</div>
<div class="abs" style="left:0;top:496px;width:19px;height:1px;background:#5e5c5b;"></div>
<div class="rh" style="top:497px;height:14px;line-height:16px;">16</div>
<div class="abs" style="left:0;top:511px;width:19px;height:1px;background:#5e5c5b;"></div>
<div class="rh" style="top:512px;height:14px;line-height:16px;">17</div>
<div class="abs" style="left:0;top:526px;width:19px;height:1px;background:#5e5c5b;"></div>
<div class="rh" style="top:527px;height:14px;line-height:16px;">18</div>
<div class="abs" style="left:0;top:541px;width:19px;height:1px;background:#5e5c5b;"></div>
<div class="rh" style="top:542px;height:14px;line-height:16px;">19</div>
<div class="abs" style="left:0;top:556px;width:19px;height:1px;background:#5e5c5b;"></div>
<div class="rh" style="top:557px;height:14px;line-height:16px;">20</div>
<div class="abs" style="left:0;top:571px;width:19px;height:1px;background:#5e5c5b;"></div>
<div class="rh" style="top:572px;height:14px;line-height:16px;">21</div>
<div class="abs" style="left:0;top:586px;width:19px;height:1px;background:#5e5c5b;"></div>
<div class="rh" style="top:587px;height:14px;line-height:16px;">22</div>
<div class="abs" style="left:0;top:601px;width:19px;height:1px;background:#5e5c5b;"></div>
<div class="rh" style="top:602px;height:14px;line-height:16px;">23</div>
<div class="abs" style="left:0;top:616px;width:19px;height:1px;background:#5e5c5b;"></div>
<div class="rh" style="top:617px;height:14px;line-height:16px;">24</div>
<div class="abs" style="left:0;top:631px;width:19px;height:1px;background:#5e5c5b;"></div>
<div class="rh" style="top:632px;height:14px;line-height:16px;">25</div>
<div class="abs" style="left:0;top:646px;width:19px;height:1px;background:#5e5c5b;"></div>
<div class="rh" style="top:647px;height:14px;line-height:16px;">26</div>
<div class="abs" style="left:0;top:661px;width:19px;height:1px;background:#5e5c5b;"></div>
<div class="rh" style="top:662px;height:14px;line-height:16px;">27</div>
<div class="abs" style="left:0;top:676px;width:19px;height:1px;background:#5e5c5b;"></div>
<div class="rh" style="top:677px;height:12px;line-height:14px;">28</div>
<div class="abs" style="left:0;top:689px;width:19px;height:1px;background:#5e5c5b;"></div>
<div class="rh" style="top:690px;height:13px;line-height:15px;">29</div>
<div class="abs" style="left:0;top:703px;width:19px;height:1px;background:#5e5c5b;"></div>
<div class="rh" style="top:704px;height:13px;line-height:15px;">30</div>
<div class="abs" style="left:0;top:717px;width:19px;height:1px;background:#5e5c5b;"></div>
<div class="rh" style="top:718px;height:13px;line-height:15px;">31</div>
<div class="abs" style="left:0;top:731px;width:19px;height:1px;background:#5e5c5b;"></div>
<div class="rh" style="top:732px;height:13px;line-height:15px;background:#666666;color:#f0f0f0;">32</div>
<div class="abs" style="left:17px;top:732px;width:2px;height:13px;background:#4a7a60;"></div>
<div class="abs" style="left:0;top:745px;width:19px;height:1px;background:#5e5c5b;"></div>
<div class="rh" style="top:746px;height:13px;line-height:15px;">33</div>
<div class="abs" style="left:0;top:759px;width:19px;height:1px;background:#5e5c5b;"></div>
<div class="rh" style="top:760px;height:13px;line-height:15px;">34</div>
<div class="abs" style="left:0;top:773px;width:19px;height:1px;background:#5e5c5b;"></div>
<div class="rh" style="top:774px;height:13px;line-height:15px;">35</div>
<div class="abs" style="left:0;top:787px;width:19px;height:1px;background:#5e5c5b;"></div>
<div class="rh" style="top:788px;height:13px;line-height:15px;">36</div>
<div class="abs" style="left:0;top:801px;width:19px;height:1px;background:#5e5c5b;"></div>
<div class="rh" style="top:802px;height:13px;line-height:15px;">37</div>
<div class="abs" style="left:0;top:815px;width:19px;height:1px;background:#5e5c5b;"></div>
<div class="rh" style="top:816px;height:13px;line-height:15px;">38</div>
<div class="abs" style="left:0;top:829px;width:19px;height:1px;background:#5e5c5b;"></div>
<div class="rh" style="top:830px;height:13px;line-height:15px;">39</div>
<div class="abs" style="left:0;top:843px;width:19px;height:1px;background:#5e5c5b;"></div>
<div class="rh" style="top:844px;height:13px;line-height:15px;">40</div>
<div class="abs" style="left:0;top:857px;width:19px;height:1px;background:#5e5c5b;"></div>
<div class="rh" style="top:858px;height:13px;line-height:15px;">41</div>
<div class="abs" style="left:0;top:871px;width:19px;height:1px;background:#5e5c5b;"></div>
<div class="rh" style="top:872px;height:13px;line-height:15px;">42</div>
<div class="abs" style="left:0;top:885px;width:19px;height:1px;background:#5e5c5b;"></div>
<div class="rh" style="top:886px;height:13px;line-height:15px;">43</div>
<div class="abs" style="left:0;top:899px;width:19px;height:1px;background:#5e5c5b;"></div>
<div class="rh" style="top:900px;height:13px;line-height:15px;">44</div>
<div class="abs" style="left:0;top:913px;width:19px;height:1px;background:#5e5c5b;"></div>
<div class="rh" style="top:914px;height:13px;line-height:15px;">45</div>
<div class="abs" style="left:0;top:927px;width:19px;height:1px;background:#5e5c5b;"></div>
<div class="rh" style="top:928px;height:13px;line-height:15px;">46</div>
<div class="abs" style="left:0;top:941px;width:19px;height:1px;background:#5e5c5b;"></div>
<div class="rh" style="top:942px;height:13px;line-height:15px;">47</div>
<div class="abs" style="left:0;top:955px;width:19px;height:1px;background:#5e5c5b;"></div>
<div class="rh" style="top:956px;height:13px;line-height:15px;">48</div>
<div class="abs" style="left:0;top:969px;width:19px;height:1px;background:#5e5c5b;"></div>
<div class="rh" style="top:970px;height:13px;line-height:15px;">49</div>
<div class="abs" style="left:0;top:983px;width:19px;height:1px;background:#5e5c5b;"></div>
<div class="abs" style="left:36px;top:287px;width:1832px;height:29px;background:#5b9bd5;"></div>
<div class="c" style="left:36px;top:287px;width:68px;height:29px;display:flex;align-items:center;justify-content:center;color:#0f1d3c;font-size:9.4px;letter-spacing:0.72px;"><span style="flex:none"><span class="u">BULAN</span></span></div>
<div class="c" style="left:105px;top:287px;width:86px;height:29px;display:flex;align-items:center;justify-content:center;color:#0f1d3c;font-size:9.4px;letter-spacing:0.72px;"><span style="flex:none">Jumlah Karyawan</span></div>
<div class="c" style="left:192px;top:287px;width:79px;height:14px;display:flex;align-items:center;justify-content:center;color:#0f1d3c;font-size:9.4px;letter-spacing:0.72px;"><span style="flex:none"><span class="u">GAJI</span></span></div>
<div class="c" style="left:192px;top:302px;width:79px;height:14px;display:flex;align-items:center;justify-content:center;color:#0f1d3c;font-size:9.4px;letter-spacing:0.72px;"><span style="flex:none">Pegawai <span class="u">TIM</span></span></div>
<div class="c" style="left:272px;top:287px;width:214px;height:14px;display:flex;align-items:center;justify-content:center;color:#0f1d3c;font-size:9.4px;letter-spacing:0.72px;"><span style="flex:none"><span class="u">PPH</span> 21</span></div>
<div class="c" style="left:272px;top:302px;width:214px;height:14px;display:flex;align-items:center;justify-content:center;color:#0f1d3c;font-size:9.4px;letter-spacing:0.72px;"><span style="flex:none">Pegawai <span class="u">RAR,OS</span> <span class="u">LAIN,</span> <span class="u">TIM,</span> <span class="u">PIM,</span> <span class="u">BTS</span> <span class="u">SALES</span></span></div>
<div class="c" style="left:487px;top:287px;width:69px;height:29px;display:flex;align-items:center;justify-content:center;color:#0f1d3c;font-size:9.4px;letter-spacing:0.72px;"><span style="flex:none">Jumlah Karyawan Resign</span></div>
<div class="c" style="left:557px;top:287px;width:87px;height:29px;display:flex;align-items:center;justify-content:center;color:#0f1d3c;font-size:9.4px;letter-spacing:0.72px;"><span style="flex:none"><span class="u">DPP</span> Karyawan Resign</span></div>
<div class="c" style="left:645px;top:287px;width:109px;height:29px;display:flex;align-items:center;justify-content:center;color:#0f1d3c;font-size:9.4px;letter-spacing:0.72px;"><span style="flex:none">PPh 21 Karyawan Resign</span></div>
<div class="c" style="left:755px;top:287px;width:139px;height:29px;display:flex;align-items:center;justify-content:center;color:#0f1d3c;font-size:9.4px;letter-spacing:0.72px;"><span style="flex:none">Jumlah Karyawan <span class="u">NIK</span> Tidak Valid</span></div>
<div class="c" style="left:895px;top:287px;width:139px;height:29px;display:flex;align-items:center;justify-content:center;color:#0f1d3c;font-size:9.4px;letter-spacing:0.72px;"><span style="flex:none"><span class="u">DPP</span> Karyawan <span class="u">NIK</span> Tidak Valid</span></div>
<div class="c" style="left:1035px;top:287px;width:139px;height:29px;display:flex;align-items:center;justify-content:center;color:#0f1d3c;font-size:9.4px;letter-spacing:0.72px;"><span style="flex:none">PPh 21 Karyawan <span class="u">NIK</span> Tidak Valid</span></div>
<div class="c" style="left:1175px;top:287px;width:110px;height:29px;display:flex;align-items:center;justify-content:center;color:#0f1d3c;font-size:9.4px;letter-spacing:0.72px;"><span style="flex:none">Total PPh 21 <span class="u">KB/</span> <span class="u">(LB)</span></span></div>
<div class="c" style="left:1286px;top:287px;width:81px;height:29px;display:flex;align-items:center;justify-content:center;color:#0f1d3c;font-size:9.4px;letter-spacing:0.72px;"><span style="flex:none">Selisih <span class="u">KB</span> / <span class="u">(LB)</span></span></div>
<div class="c" style="left:1368px;top:287px;width:94px;height:29px;display:flex;align-items:center;justify-content:center;color:#0f1d3c;font-size:9.4px;letter-spacing:0.72px;"><span style="flex:none"><span class="u">TOTAL</span> <span class="u">SSP</span></span></div>
<div class="c" style="left:1463px;top:285.7px;width:330px;height:14px;display:flex;align-items:center;justify-content:center;color:#0f1d3c;font-size:9.4px;letter-spacing:0.72px;"><span style="flex:none"><span class="u">SSP</span> 1</span></div>
<div class="c" style="left:1463px;top:302px;width:75px;height:14px;display:flex;align-items:center;justify-content:center;color:#0f1d3c;font-size:9.4px;letter-spacing:0.72px;"><span style="flex:none">Nilai</span></div>
<div class="c" style="left:1539px;top:302px;width:66px;height:14px;display:flex;align-items:center;justify-content:flex-start;color:#0f1d3c;font-size:9.4px;letter-spacing:0.72px;padding-left:2px;"><span style="flex:none"><span class="u">TGL</span> <span class="u">BAYAR</span></span></div>
<div class="c" style="left:1606px;top:302px;width:187px;height:14px;display:flex;align-items:center;justify-content:flex-start;color:#0f1d3c;font-size:9.4px;letter-spacing:0.72px;padding-left:2px;"><span style="flex:none"><span class="u">NTPN</span></span></div>
<div class="c" style="left:1794px;top:287px;width:74px;height:29px;display:flex;align-items:center;justify-content:center;color:#0f1d3c;font-size:9.4px;letter-spacing:0.72px;"><span style="flex:none"><span class="u">TGL</span> Lapor</span></div>
<div class="c" style="left:36px;top:317px;width:68px;height:14px;line-height:16px;color:#1c1c1c;padding-left:2px;font-size:9.4px;letter-spacing:0.72px;">Januari</div>
<div class="c" style="left:192px;top:317px;width:79px;height:14px;line-height:16px;color:#1c1c1c;text-align:right;padding-right:1.92px;font-size:9.4px;letter-spacing:0.58px;">154.005.256</div>
<div class="c" style="left:272px;top:317px;width:214px;height:14px;line-height:16px;color:#1c1c1c;text-align:right;padding-right:2.41px;font-size:9.4px;letter-spacing:0.59px;">13.823</div>
<div class="c" style="left:1175px;top:317px;width:110px;height:14px;line-height:16px;color:#1c1c1c;text-align:right;padding-right:5.41px;font-size:9.4px;letter-spacing:0.59px;">13.823</div>
<div class="c" style="left:1286px;top:317px;width:81px;height:14px;line-height:16px;color:#1c1c1c;text-align:right;padding-right:5.15px;font-size:9.4px;letter-spacing:-0.15px;">-</div>
<div class="c" style="left:1368px;top:317px;width:94px;height:14px;line-height:16px;color:#1c1c1c;text-align:right;padding-right:5.41px;font-size:9.4px;letter-spacing:0.59px;">13.823</div>
<div class="c" style="left:1463px;top:317px;width:75px;height:14px;line-height:16px;color:#1c1c1c;text-align:right;padding-right:5.41px;font-size:9.4px;letter-spacing:0.59px;">13.823</div>
<div class="c" style="left:1539px;top:317px;width:66px;height:14px;line-height:16px;color:#1c1c1c;text-align:right;padding-right:1.5px;font-family:'Liberation Sans',sans-serif;font-size:10.7px;line-height:14px;">20/02/2025</div>
<div class="c" style="left:1606px;top:317px;width:187px;height:14px;line-height:16px;color:#1c1c1c;padding-left:2px;font-family:'Liberation Sans',sans-serif;font-size:10.75px;letter-spacing:-0.02px;line-height:14px;">KET-00530/PBK-CT/KPP.0616/2025</div>
<div class="c" style="left:1794px;top:317px;width:74px;height:14px;line-height:16px;color:#1c1c1c;text-align:right;padding-right:2px;font-family:'Liberation Sans',sans-serif;font-size:10.7px;line-height:14px;">20/02/2025</div>
<div class="c" style="left:36px;top:332px;width:68px;height:14px;line-height:16px;color:#1c1c1c;padding-left:2px;font-size:9.4px;letter-spacing:0.72px;">Januari-P1</div>
<div class="c" style="left:105px;top:332px;width:86px;height:14px;line-height:16px;color:#1c1c1c;text-align:right;padding-right:1.44px;font-size:9.4px;letter-spacing:0.56px;">31,00</div>
<div class="c" style="left:192px;top:332px;width:79px;height:14px;line-height:16px;color:#1c1c1c;text-align:right;padding-right:1.92px;font-size:9.4px;letter-spacing:0.58px;">104.773.655</div>
<div class="c" style="left:272px;top:332px;width:214px;height:14px;line-height:16px;color:#1c1c1c;text-align:right;padding-right:2.41px;font-size:9.4px;letter-spacing:0.59px;">13.823</div>
<div class="c" style="left:487px;top:332px;width:69px;height:14px;line-height:16px;color:#1c1c1c;text-align:right;padding-right:1.26px;font-size:9.4px;letter-spacing:0.74px;">10</div>
<div class="c" style="left:557px;top:332px;width:87px;height:14px;line-height:16px;color:#1c1c1c;text-align:right;padding-right:1.44px;font-size:9.4px;letter-spacing:0.56px;">33.853.363</div>
<div class="c" style="left:645px;top:332px;width:109px;height:14px;line-height:16px;color:#1c1c1c;text-align:right;padding-right:1.76px;font-size:9.4px;letter-spacing:0.74px;">0</div>
<div class="c" style="left:755px;top:332px;width:139px;height:14px;line-height:16px;color:#1c1c1c;text-align:right;padding-right:1.76px;font-size:9.4px;letter-spacing:0.74px;">0</div>
<div class="c" style="left:895px;top:332px;width:139px;height:14px;line-height:16px;color:#1c1c1c;text-align:right;padding-right:1.76px;font-size:9.4px;letter-spacing:0.74px;">0</div>
<div class="c" style="left:1035px;top:332px;width:139px;height:14px;line-height:16px;color:#1c1c1c;text-align:right;padding-right:1.76px;font-size:9.4px;letter-spacing:0.74px;">0</div>
<div class="c" style="left:1175px;top:332px;width:110px;height:14px;line-height:16px;color:#1c1c1c;text-align:right;padding-right:5.41px;font-size:9.4px;letter-spacing:0.59px;">13.823</div>
<div class="c" style="left:1286px;top:332px;width:81px;height:14px;line-height:16px;color:#1c1c1c;text-align:right;padding-right:5.15px;font-size:9.4px;letter-spacing:-0.15px;">-</div>
<div class="c" style="left:1368px;top:332px;width:94px;height:14px;line-height:16px;color:#1c1c1c;text-align:right;padding-right:5.41px;font-size:9.4px;letter-spacing:0.59px;">13.823</div>
<div class="c" style="left:1463px;top:332px;width:75px;height:14px;line-height:16px;color:#1c1c1c;text-align:right;padding-right:5.41px;font-size:9.4px;letter-spacing:0.59px;">13.823</div>
<div class="c" style="left:1539px;top:332px;width:66px;height:14px;line-height:16px;color:#1c1c1c;text-align:right;padding-right:1.5px;font-family:'Liberation Sans',sans-serif;font-size:10.7px;line-height:14px;">20/02/2025</div>
<div class="c" style="left:1606px;top:332px;width:187px;height:14px;line-height:16px;color:#1c1c1c;padding-left:2px;font-family:'Liberation Sans',sans-serif;font-size:10.75px;letter-spacing:-0.02px;line-height:14px;">KET-00530/PBK-CT/KPP.0616/2025</div>
<div class="c" style="left:1794px;top:332px;width:74px;height:14px;line-height:16px;color:#1c1c1c;text-align:right;padding-right:2px;font-family:'Liberation Sans',sans-serif;font-size:10.7px;line-height:14px;">22/01/2026</div>
<div class="c" style="left:36px;top:347px;width:68px;height:14px;line-height:16px;color:#1c1c1c;padding-left:2px;font-size:9.4px;letter-spacing:0.72px;">Februari</div>
<div class="c" style="left:192px;top:347px;width:79px;height:14px;line-height:16px;color:#1c1c1c;text-align:right;padding-right:1.92px;font-size:9.4px;letter-spacing:0.58px;">153.612.199</div>
<div class="c" style="left:272px;top:347px;width:214px;height:14px;line-height:16px;color:#1c1c1c;text-align:right;padding-right:2.41px;font-size:9.4px;letter-spacing:0.59px;">87.864</div>
<div class="c" style="left:1175px;top:347px;width:110px;height:14px;line-height:16px;color:#1c1c1c;text-align:right;padding-right:5.41px;font-size:9.4px;letter-spacing:0.59px;">87.864</div>
<div class="c" style="left:1286px;top:347px;width:81px;height:14px;line-height:16px;color:#1c1c1c;text-align:right;padding-right:5.15px;font-size:9.4px;letter-spacing:-0.15px;">-</div>
<div class="c" style="left:1368px;top:347px;width:94px;height:14px;line-height:16px;color:#1c1c1c;text-align:right;padding-right:5.41px;font-size:9.4px;letter-spacing:0.59px;">87.864</div>
<div class="c" style="left:1463px;top:347px;width:75px;height:14px;line-height:16px;color:#1c1c1c;text-align:right;padding-right:5.41px;font-size:9.4px;letter-spacing:0.59px;">87.864</div>
<div class="c" style="left:1539px;top:347px;width:66px;height:14px;line-height:16px;color:#1c1c1c;text-align:right;padding-right:1.5px;font-family:'Liberation Sans',sans-serif;font-size:10.7px;line-height:14px;">14/03/2025</div>
<div class="c" style="left:1606px;top:347px;width:187px;height:14px;line-height:16px;color:#1c1c1c;padding-left:2px;font-family:'Liberation Sans',sans-serif;font-size:10.75px;letter-spacing:-0.02px;line-height:14px;">KET-01490/PBK-CT/KPP.0616/2025</div>
<div class="c" style="left:1794px;top:347px;width:74px;height:14px;line-height:16px;color:#1c1c1c;text-align:right;padding-right:2px;font-family:'Liberation Sans',sans-serif;font-size:10.7px;line-height:14px;">22/03/2025</div>
<div class="c" style="left:36px;top:362px;width:68px;height:14px;line-height:16px;color:#1c1c1c;padding-left:2px;font-size:9.4px;letter-spacing:0.72px;">Februari-P1</div>
<div class="c" style="left:105px;top:362px;width:86px;height:14px;line-height:16px;color:#1c1c1c;text-align:right;padding-right:1.44px;font-size:9.4px;letter-spacing:0.56px;">29,00</div>
<div class="c" style="left:192px;top:362px;width:79px;height:14px;line-height:16px;color:#1c1c1c;text-align:right;padding-right:1.92px;font-size:9.4px;letter-spacing:0.58px;">102.740.588</div>
<div class="c" style="left:272px;top:362px;width:214px;height:14px;line-height:16px;color:#1c1c1c;text-align:right;padding-right:2.41px;font-size:9.4px;letter-spacing:0.59px;">87.864</div>
<div class="c" style="left:487px;top:362px;width:69px;height:14px;line-height:16px;color:#1c1c1c;text-align:right;padding-right:1.26px;font-size:9.4px;letter-spacing:0.74px;">10</div>
<div class="c" style="left:557px;top:362px;width:87px;height:14px;line-height:16px;color:#1c1c1c;text-align:right;padding-right:1.44px;font-size:9.4px;letter-spacing:0.56px;">78.913.822</div>
<div class="c" style="left:645px;top:362px;width:109px;height:14px;line-height:16px;color:#1c1c1c;text-align:right;padding-right:1.76px;font-size:9.4px;letter-spacing:0.74px;">0</div>
<div class="c" style="left:755px;top:362px;width:139px;height:14px;line-height:16px;color:#1c1c1c;text-align:right;padding-right:1.76px;font-size:9.4px;letter-spacing:0.74px;">1</div>
<div class="c" style="left:895px;top:362px;width:139px;height:14px;line-height:16px;color:#1c1c1c;text-align:right;padding-right:1.96px;font-size:9.4px;letter-spacing:0.54px;">3.861.110</div>
<div class="c" style="left:1035px;top:362px;width:139px;height:14px;line-height:16px;color:#1c1c1c;text-align:right;padding-right:1.76px;font-size:9.4px;letter-spacing:0.74px;">0</div>
<div class="c" style="left:1175px;top:362px;width:110px;height:14px;line-height:16px;color:#1c1c1c;text-align:right;padding-right:5.41px;font-size:9.4px;letter-spacing:0.59px;">87.864</div>
<div class="c" style="left:1286px;top:362px;width:81px;height:14px;line-height:16px;color:#1c1c1c;text-align:right;padding-right:5.15px;font-size:9.4px;letter-spacing:-0.15px;">-</div>
<div class="c" style="left:1368px;top:362px;width:94px;height:14px;line-height:16px;color:#1c1c1c;text-align:right;padding-right:5.41px;font-size:9.4px;letter-spacing:0.59px;">87.864</div>
<div class="c" style="left:1463px;top:362px;width:75px;height:14px;line-height:16px;color:#1c1c1c;text-align:right;padding-right:5.41px;font-size:9.4px;letter-spacing:0.59px;">87.864</div>
<div class="c" style="left:1539px;top:362px;width:66px;height:14px;line-height:16px;color:#1c1c1c;text-align:right;padding-right:1.5px;font-family:'Liberation Sans',sans-serif;font-size:10.7px;line-height:14px;">14/03/2025</div>
<div class="c" style="left:1606px;top:362px;width:187px;height:14px;line-height:16px;color:#1c1c1c;padding-left:2px;font-family:'Liberation Sans',sans-serif;font-size:10.75px;letter-spacing:-0.02px;line-height:14px;">KET-01490/PBK-CT/KPP.0616/2025</div>
<div class="c" style="left:1794px;top:362px;width:74px;height:14px;line-height:16px;color:#1c1c1c;text-align:right;padding-right:2px;font-family:'Liberation Sans',sans-serif;font-size:10.7px;line-height:14px;">31/01/2026</div>
<div class="c" style="left:36px;top:377px;width:68px;height:14px;line-height:16px;color:#1c1c1c;padding-left:2px;font-size:9.4px;letter-spacing:0.72px;">Maret</div>
<div class="c" style="left:192px;top:377px;width:79px;height:14px;line-height:16px;color:#1c1c1c;text-align:right;padding-right:1.92px;font-size:9.4px;letter-spacing:0.58px;">168.703.698</div>
<div class="c" style="left:272px;top:377px;width:214px;height:14px;line-height:16px;color:#1c1c1c;text-align:right;padding-right:2.39px;font-size:9.4px;letter-spacing:0.61px;">741.272</div>
<div class="c" style="left:1175px;top:377px;width:110px;height:14px;line-height:16px;color:#1c1c1c;text-align:right;padding-right:5.39px;font-size:9.4px;letter-spacing:0.61px;">741.272</div>
<div class="c" style="left:1286px;top:377px;width:81px;height:14px;line-height:16px;color:#1c1c1c;text-align:right;padding-right:5.15px;font-size:9.4px;letter-spacing:-0.15px;">-</div>
<div class="c" style="left:1368px;top:377px;width:94px;height:14px;line-height:16px;color:#1c1c1c;text-align:right;padding-right:5.39px;font-size:9.4px;letter-spacing:0.61px;">741.272</div>
<div class="c" style="left:1463px;top:377px;width:75px;height:14px;line-height:16px;color:#1c1c1c;text-align:right;padding-right:5.39px;font-size:9.4px;letter-spacing:0.61px;">741.272</div>
<div class="c" style="left:1539px;top:377px;width:66px;height:14px;line-height:16px;color:#1c1c1c;text-align:right;padding-right:1.5px;font-family:'Liberation Sans',sans-serif;font-size:10.7px;line-height:14px;">15/04/2025</div>
<div class="c" style="left:1606px;top:377px;width:187px;height:14px;line-height:16px;color:#1c1c1c;padding-left:2px;font-family:'Liberation Sans',sans-serif;font-size:10.75px;letter-spacing:-0.02px;line-height:14px;">AD8723IR22NKGTDJ</div>
<div class="c" style="left:1794px;top:377px;width:74px;height:14px;line-height:16px;color:#1c1c1c;text-align:right;padding-right:2px;font-family:'Liberation Sans',sans-serif;font-size:10.7px;line-height:14px;">15/04/2025</div>
<div class="c" style="left:36px;top:392px;width:68px;height:14px;line-height:16px;color:#1c1c1c;padding-left:2px;font-size:9.4px;letter-spacing:0.72px;">Maret-P1</div>
<div class="c" style="left:105px;top:392px;width:86px;height:14px;line-height:16px;color:#1c1c1c;text-align:right;padding-right:1.44px;font-size:9.4px;letter-spacing:0.56px;">29,00</div>
<div class="c" style="left:192px;top:392px;width:79px;height:14px;line-height:16px;color:#1c1c1c;text-align:right;padding-right:1.92px;font-size:9.4px;letter-spacing:0.58px;">159.668.711</div>
<div class="c" style="left:272px;top:392px;width:214px;height:14px;line-height:16px;color:#1c1c1c;text-align:right;padding-right:2.39px;font-size:9.4px;letter-spacing:0.61px;">842.959</div>
<div class="c" style="left:487px;top:392px;width:69px;height:14px;line-height:16px;color:#1c1c1c;text-align:right;padding-right:1.26px;font-size:9.4px;letter-spacing:0.74px;">11</div>
<div class="c" style="left:557px;top:392px;width:87px;height:14px;line-height:16px;color:#1c1c1c;text-align:right;padding-right:1.44px;font-size:9.4px;letter-spacing:0.56px;">79.280.041</div>
<div class="c" style="left:645px;top:392px;width:109px;height:14px;line-height:16px;color:#1c1c1c;text-align:right;padding-right:1.98px;font-size:9.4px;letter-spacing:0.52px;">-101.687</div>
<div class="c" style="left:755px;top:392px;width:139px;height:14px;line-height:16px;color:#1c1c1c;text-align:right;padding-right:1.76px;font-size:9.4px;letter-spacing:0.74px;">0</div>
<div class="c" style="left:895px;top:392px;width:139px;height:14px;line-height:16px;color:#1c1c1c;text-align:right;padding-right:1.76px;font-size:9.4px;letter-spacing:0.74px;">0</div>
<div class="c" style="left:1035px;top:392px;width:139px;height:14px;line-height:16px;color:#1c1c1c;text-align:right;padding-right:1.76px;font-size:9.4px;letter-spacing:0.74px;">0</div>
<div class="c" style="left:1175px;top:392px;width:110px;height:14px;line-height:16px;color:#1c1c1c;text-align:right;padding-right:5.39px;font-size:9.4px;letter-spacing:0.61px;">741.272</div>
<div class="c" style="left:1368px;top:392px;width:94px;height:14px;line-height:16px;color:#1c1c1c;text-align:right;padding-right:5.39px;font-size:9.4px;letter-spacing:0.61px;">741.272</div>
<div class="c" style="left:1463px;top:392px;width:75px;height:14px;line-height:16px;color:#1c1c1c;text-align:right;padding-right:5.39px;font-size:9.4px;letter-spacing:0.61px;">741.272</div>
<div class="c" style="left:1539px;top:392px;width:66px;height:14px;line-height:16px;color:#1c1c1c;text-align:right;padding-right:1.5px;font-family:'Liberation Sans',sans-serif;font-size:10.7px;line-height:14px;">15/04/2025</div>
<div class="c" style="left:1606px;top:392px;width:187px;height:14px;line-height:16px;color:#1c1c1c;padding-left:2px;font-family:'Liberation Sans',sans-serif;font-size:10.75px;letter-spacing:-0.02px;line-height:14px;">AD8723IR22NKGTDJ</div>
<div class="c" style="left:1794px;top:392px;width:74px;height:14px;line-height:16px;color:#1c1c1c;text-align:right;padding-right:2px;font-family:'Liberation Sans',sans-serif;font-size:10.7px;line-height:14px;">31/01/2026</div>
<div class="c" style="left:36px;top:407px;width:68px;height:14px;line-height:16px;color:#1c1c1c;padding-left:2px;font-size:9.4px;letter-spacing:0.72px;"><span class="u">APRIL</span></div>
<div class="c" style="left:192px;top:407px;width:79px;height:14px;line-height:16px;color:#1c1c1c;text-align:right;padding-right:1.92px;font-size:9.4px;letter-spacing:0.58px;">171.994.017</div>
<div class="c" style="left:272px;top:407px;width:214px;height:14px;line-height:16px;color:#1c1c1c;text-align:right;padding-right:2.48px;font-size:9.4px;letter-spacing:0.52px;">-126.162</div>
<div class="c" style="left:1175px;top:407px;width:110px;height:14px;line-height:16px;color:#1c1c1c;text-align:right;padding-right:2.06px;font-size:9.4px;letter-spacing:0.44px;">(126.162)</div>
<div class="c" style="left:1286px;top:407px;width:81px;height:14px;line-height:16px;color:#1c1c1c;text-align:right;padding-right:1.06px;font-size:9.4px;letter-spacing:0.44px;">(126.162)</div>
<div class="c" style="left:1368px;top:407px;width:94px;height:14px;line-height:16px;color:#1c1c1c;text-align:right;padding-right:6.15px;font-size:9.4px;letter-spacing:-0.15px;">-</div>
<div class="c" style="left:1794px;top:407px;width:74px;height:14px;line-height:16px;color:#1c1c1c;text-align:right;padding-right:2px;font-family:'Liberation Sans',sans-serif;font-size:10.7px;line-height:14px;">19/05/2025</div>
<div class="c" style="left:36px;top:422px;width:68px;height:14px;line-height:16px;color:#1c1c1c;padding-left:2px;font-size:9.4px;letter-spacing:0.72px;">April-P1</div>
<div class="c" style="left:105px;top:422px;width:86px;height:14px;line-height:16px;color:#1c1c1c;text-align:right;padding-right:1.44px;font-size:9.4px;letter-spacing:0.56px;">32,00</div>
<div class="c" style="left:192px;top:422px;width:79px;height:14px;line-height:16px;color:#1c1c1c;text-align:right;padding-right:1.92px;font-size:9.4px;letter-spacing:0.58px;">137.121.460</div>
<div class="c" style="left:272px;top:422px;width:214px;height:14px;line-height:16px;color:#1c1c1c;text-align:right;padding-right:2.41px;font-size:9.4px;letter-spacing:0.59px;">78.082</div>
<div class="c" style="left:487px;top:422px;width:69px;height:14px;line-height:16px;color:#1c1c1c;text-align:right;padding-right:1.26px;font-size:9.4px;letter-spacing:0.74px;">11</div>
<div class="c" style="left:557px;top:422px;width:87px;height:14px;line-height:16px;color:#1c1c1c;text-align:right;padding-right:1.44px;font-size:9.4px;letter-spacing:0.56px;">98.838.364</div>
<div class="c" style="left:645px;top:422px;width:109px;height:14px;line-height:16px;color:#1c1c1c;text-align:right;padding-right:1.98px;font-size:9.4px;letter-spacing:0.52px;">-264.340</div>
<div class="c" style="left:755px;top:422px;width:139px;height:14px;line-height:16px;color:#1c1c1c;text-align:right;padding-right:1.76px;font-size:9.4px;letter-spacing:0.74px;">0</div>
<div class="c" style="left:895px;top:422px;width:139px;height:14px;line-height:16px;color:#1c1c1c;text-align:right;padding-right:1.76px;font-size:9.4px;letter-spacing:0.74px;">0</div>
<div class="c" style="left:1035px;top:422px;width:139px;height:14px;line-height:16px;color:#1c1c1c;text-align:right;padding-right:1.76px;font-size:9.4px;letter-spacing:0.74px;">0</div>
<div class="c" style="left:1175px;top:422px;width:110px;height:14px;line-height:16px;color:#1c1c1c;text-align:right;padding-right:2.06px;font-size:9.4px;letter-spacing:0.44px;">(186.258)</div>
<div class="c" style="left:1286px;top:422px;width:81px;height:14px;line-height:16px;color:#1c1c1c;text-align:right;padding-right:1.09px;font-size:9.4px;letter-spacing:0.41px;">(60.096)</div>
<div class="c" style="left:1368px;top:422px;width:94px;height:14px;line-height:16px;color:#1c1c1c;text-align:right;padding-right:6.15px;font-size:9.4px;letter-spacing:-0.15px;">-</div>
<div class="c" style="left:1794px;top:422px;width:74px;height:14px;line-height:16px;color:#1c1c1c;text-align:right;padding-right:2px;font-family:'Liberation Sans',sans-serif;font-size:10.7px;line-height:14px;">31/01/2026</div>
<div class="c" style="left:36px;top:437px;width:68px;height:14px;line-height:16px;color:#1c1c1c;padding-left:2px;font-size:9.4px;letter-spacing:0.72px;"><span class="u">MEI</span></div>
<div class="c" style="left:192px;top:437px;width:79px;height:14px;line-height:16px;color:#1c1c1c;text-align:right;padding-right:1.92px;font-size:9.4px;letter-spacing:0.58px;">239.250.372</div>
<div class="c" style="left:272px;top:437px;width:214px;height:14px;line-height:16px;color:#1c1c1c;text-align:right;padding-right:2.39px;font-size:9.4px;letter-spacing:0.61px;">193.038</div>
<div class="c" style="left:1175px;top:437px;width:110px;height:14px;line-height:16px;color:#1c1c1c;text-align:right;padding-right:5.39px;font-size:9.4px;letter-spacing:0.61px;">193.038</div>
<div class="c" style="left:1286px;top:437px;width:81px;height:14px;line-height:16px;color:#1c1c1c;text-align:right;padding-right:1.06px;font-size:9.4px;letter-spacing:0.44px;">(126.162)</div>
<div class="c" style="left:1368px;top:437px;width:94px;height:14px;line-height:16px;color:#1c1c1c;text-align:right;padding-right:5.39px;font-size:9.4px;letter-spacing:0.61px;">193.038</div>
<div class="c" style="left:1463px;top:437px;width:75px;height:14px;line-height:16px;color:#1c1c1c;text-align:right;padding-right:5.41px;font-size:9.4px;letter-spacing:0.59px;">66.876</div>
<div class="c" style="left:1539px;top:437px;width:66px;height:14px;line-height:16px;color:#1c1c1c;text-align:right;padding-right:1.5px;font-family:'Liberation Sans',sans-serif;font-size:10.7px;line-height:14px;">13/06/2025</div>
<div class="c" style="left:1606px;top:437px;width:187px;height:14px;line-height:16px;color:#1c1c1c;padding-left:2px;font-family:'Liberation Sans',sans-serif;font-size:10.75px;letter-spacing:-0.02px;line-height:14px;">2FF6A683N6I3P3FJ</div>
<div class="c" style="left:1794px;top:437px;width:74px;height:14px;line-height:16px;color:#1c1c1c;text-align:right;padding-right:2px;font-family:'Liberation Sans',sans-serif;font-size:10.7px;line-height:14px;">13/06/2025</div>
<div class="c" style="left:36px;top:452px;width:68px;height:14px;line-height:16px;color:#1c1c1c;padding-left:2px;font-size:9.4px;letter-spacing:0.72px;">Mei-P1</div>
<div class="c" style="left:105px;top:452px;width:86px;height:14px;line-height:16px;color:#1c1c1c;text-align:right;padding-right:1.44px;font-size:9.4px;letter-spacing:0.56px;">38,00</div>
<div class="c" style="left:192px;top:452px;width:79px;height:14px;line-height:16px;color:#1c1c1c;text-align:right;padding-right:1.92px;font-size:9.4px;letter-spacing:0.58px;">166.370.660</div>
<div class="c" style="left:272px;top:452px;width:214px;height:14px;line-height:16px;color:#1c1c1c;text-align:right;padding-right:2.39px;font-size:9.4px;letter-spacing:0.61px;">121.687</div>
<div class="c" style="left:487px;top:452px;width:69px;height:14px;line-height:16px;color:#1c1c1c;text-align:right;padding-right:1.26px;font-size:9.4px;letter-spacing:0.74px;">17</div>
<div class="c" style="left:557px;top:452px;width:87px;height:14px;line-height:16px;color:#1c1c1c;text-align:right;padding-right:1.42px;font-size:9.4px;letter-spacing:0.58px;">163.154.942</div>
<div class="c" style="left:645px;top:452px;width:109px;height:14px;line-height:16px;color:#1c1c1c;text-align:right;padding-right:1.98px;font-size:9.4px;letter-spacing:0.52px;">-183.794</div>
<div class="c" style="left:755px;top:452px;width:139px;height:14px;line-height:16px;color:#1c1c1c;text-align:right;padding-right:1.76px;font-size:9.4px;letter-spacing:0.74px;">0</div>
<div class="c" style="left:895px;top:452px;width:139px;height:14px;line-height:16px;color:#1c1c1c;text-align:right;padding-right:1.76px;font-size:9.4px;letter-spacing:0.74px;">0</div>
<div class="c" style="left:1035px;top:452px;width:139px;height:14px;line-height:16px;color:#1c1c1c;text-align:right;padding-right:1.76px;font-size:9.4px;letter-spacing:0.74px;">0</div>
<div class="c" style="left:1175px;top:452px;width:110px;height:14px;line-height:16px;color:#1c1c1c;text-align:right;padding-right:2.06px;font-size:9.4px;letter-spacing:0.44px;">(188.269)</div>
<div class="c" style="left:1286px;top:452px;width:81px;height:14px;line-height:16px;color:#1c1c1c;text-align:right;padding-right:1.06px;font-size:9.4px;letter-spacing:0.44px;">(255.145)</div>
<div class="c" style="left:1794px;top:452px;width:74px;height:14px;line-height:16px;color:#1c1c1c;text-align:right;padding-right:2px;font-family:'Liberation Sans',sans-serif;font-size:10.7px;line-height:14px;">31/01/2026</div>
<div class="c" style="left:36px;top:467px;width:68px;height:14px;line-height:16px;color:#1c1c1c;padding-left:2px;font-size:9.4px;letter-spacing:0.72px;"><span class="u">JUNI</span></div>
<div class="c" style="left:192px;top:467px;width:79px;height:14px;line-height:16px;color:#1c1c1c;text-align:right;padding-right:1.92px;font-size:9.4px;letter-spacing:0.58px;">281.845.898</div>
<div class="c" style="left:272px;top:467px;width:214px;height:14px;line-height:16px;color:#1c1c1c;text-align:right;padding-right:2.39px;font-size:9.4px;letter-spacing:0.61px;">547.022</div>
<div class="c" style="left:1175px;top:467px;width:110px;height:14px;line-height:16px;color:#1c1c1c;text-align:right;padding-right:5.39px;font-size:9.4px;letter-spacing:0.61px;">547.022</div>
<div class="c" style="left:1286px;top:467px;width:81px;height:14px;line-height:16px;color:#1c1c1c;text-align:right;padding-right:5.15px;font-size:9.4px;letter-spacing:-0.15px;">-</div>
<div class="c" style="left:1368px;top:467px;width:94px;height:14px;line-height:16px;color:#1c1c1c;text-align:right;padding-right:5.39px;font-size:9.4px;letter-spacing:0.61px;">547.022</div>
<div class="c" style="left:1463px;top:467px;width:75px;height:14px;line-height:16px;color:#1c1c1c;text-align:right;padding-right:5.39px;font-size:9.4px;letter-spacing:0.61px;">547.022</div>
<div class="c" style="left:1539px;top:467px;width:66px;height:14px;line-height:16px;color:#1c1c1c;text-align:right;padding-right:1.5px;font-family:'Liberation Sans',sans-serif;font-size:10.7px;line-height:14px;">15/07/2025</div>
<div class="c" style="left:1606px;top:467px;width:187px;height:14px;line-height:16px;color:#1c1c1c;padding-left:2px;font-family:'Liberation Sans',sans-serif;font-size:10.75px;letter-spacing:-0.02px;line-height:14px;">B4CAE015AO2FJS2V</div>
<div class="c" style="left:1794px;top:467px;width:74px;height:14px;line-height:16px;color:#1c1c1c;text-align:right;padding-right:2px;font-family:'Liberation Sans',sans-serif;font-size:10.7px;line-height:14px;">15/07/2025</div>
<div class="c" style="left:36px;top:482px;width:68px;height:14px;line-height:16px;color:#1c1c1c;padding-left:2px;font-size:9.4px;letter-spacing:0.72px;">Juni-P1</div>
<div class="c" style="left:105px;top:482px;width:86px;height:14px;line-height:16px;color:#1c1c1c;text-align:right;padding-right:1.44px;font-size:9.4px;letter-spacing:0.56px;">62,00</div>
<div class="c" style="left:192px;top:482px;width:79px;height:14px;line-height:16px;color:#1c1c1c;text-align:right;padding-right:1.92px;font-size:9.4px;letter-spacing:0.58px;">281.845.898</div>
<div class="c" style="left:272px;top:482px;width:214px;height:14px;line-height:16px;color:#1c1c1c;text-align:right;padding-right:2.39px;font-size:9.4px;letter-spacing:0.61px;">547.022</div>
<div class="c" style="left:487px;top:482px;width:69px;height:14px;line-height:16px;color:#1c1c1c;text-align:right;padding-right:1.26px;font-size:9.4px;letter-spacing:0.74px;">0</div>
<div class="c" style="left:557px;top:482px;width:87px;height:14px;line-height:16px;color:#1c1c1c;text-align:right;padding-right:1.26px;font-size:9.4px;letter-spacing:0.74px;">0</div>
<div class="c" style="left:645px;top:482px;width:109px;height:14px;line-height:16px;color:#1c1c1c;text-align:right;padding-right:1.76px;font-size:9.4px;letter-spacing:0.74px;">0</div>
<div class="c" style="left:755px;top:482px;width:139px;height:14px;line-height:16px;color:#1c1c1c;text-align:right;padding-right:1.76px;font-size:9.4px;letter-spacing:0.74px;">0</div>
<div class="c" style="left:895px;top:482px;width:139px;height:14px;line-height:16px;color:#1c1c1c;text-align:right;padding-right:1.76px;font-size:9.4px;letter-spacing:0.74px;">0</div>
<div class="c" style="left:1035px;top:482px;width:139px;height:14px;line-height:16px;color:#1c1c1c;text-align:right;padding-right:1.76px;font-size:9.4px;letter-spacing:0.74px;">0</div>
<div class="c" style="left:1175px;top:482px;width:110px;height:14px;line-height:16px;color:#1c1c1c;text-align:right;padding-right:5.39px;font-size:9.4px;letter-spacing:0.61px;">547.022</div>
<div class="c" style="left:1286px;top:482px;width:81px;height:14px;line-height:16px;color:#1c1c1c;text-align:right;padding-right:5.15px;font-size:9.4px;letter-spacing:-0.15px;">-</div>
<div class="c" style="left:1794px;top:482px;width:74px;height:14px;line-height:16px;color:#1c1c1c;text-align:right;padding-right:2px;font-family:'Liberation Sans',sans-serif;font-size:10.7px;line-height:14px;">31/01/2026</div>
<div class="c" style="left:36px;top:497px;width:68px;height:14px;line-height:16px;color:#1c1c1c;padding-left:2px;font-size:9.4px;letter-spacing:0.72px;"><span class="u">JULI</span></div>
<div class="c" style="left:192px;top:497px;width:79px;height:14px;line-height:16px;color:#1c1c1c;text-align:right;padding-right:1.92px;font-size:9.4px;letter-spacing:0.58px;">273.209.284</div>
<div class="c" style="left:272px;top:497px;width:214px;height:14px;line-height:16px;color:#1c1c1c;text-align:right;padding-right:2.39px;font-size:9.4px;letter-spacing:0.61px;">516.693</div>
<div class="c" style="left:1175px;top:497px;width:110px;height:14px;line-height:16px;color:#1c1c1c;text-align:right;padding-right:5.39px;font-size:9.4px;letter-spacing:0.61px;">516.693</div>
<div class="c" style="left:1286px;top:497px;width:81px;height:14px;line-height:16px;color:#1c1c1c;text-align:right;padding-right:5.15px;font-size:9.4px;letter-spacing:-0.15px;">-</div>
<div class="c" style="left:1368px;top:497px;width:94px;height:14px;line-height:16px;color:#1c1c1c;text-align:right;padding-right:5.39px;font-size:9.4px;letter-spacing:0.61px;">516.693</div>
<div class="c" style="left:1463px;top:497px;width:75px;height:14px;line-height:16px;color:#1c1c1c;text-align:right;padding-right:5.39px;font-size:9.4px;letter-spacing:0.61px;">516.693</div>
<div class="c" style="left:1539px;top:497px;width:66px;height:14px;line-height:16px;color:#1c1c1c;text-align:right;padding-right:1.5px;font-family:'Liberation Sans',sans-serif;font-size:10.7px;line-height:14px;">15/08/2025</div>
<div class="c" style="left:1606px;top:497px;width:187px;height:14px;line-height:16px;color:#1c1c1c;padding-left:2px;font-family:'Liberation Sans',sans-serif;font-size:10.75px;letter-spacing:-0.02px;line-height:14px;">5DB3C2MDTCLMSUH8</div>
<div class="c" style="left:1794px;top:497px;width:74px;height:14px;line-height:16px;color:#1c1c1c;text-align:right;padding-right:2px;font-family:'Liberation Sans',sans-serif;font-size:10.7px;line-height:14px;">15/08/2025</div>
<div class="c" style="left:36px;top:512px;width:68px;height:14px;line-height:16px;color:#1c1c1c;padding-left:2px;font-size:9.4px;letter-spacing:0.72px;">Juli-P1</div>
<div class="c" style="left:105px;top:512px;width:86px;height:14px;line-height:16px;color:#1c1c1c;text-align:right;padding-right:1.44px;font-size:9.4px;letter-spacing:0.56px;">38,00</div>
<div class="c" style="left:192px;top:512px;width:79px;height:14px;line-height:16px;color:#1c1c1c;text-align:right;padding-right:1.92px;font-size:9.4px;letter-spacing:0.58px;">195.706.914</div>
<div class="c" style="left:272px;top:512px;width:214px;height:14px;line-height:16px;color:#1c1c1c;text-align:right;padding-right:2.39px;font-size:9.4px;letter-spacing:0.61px;">512.877</div>
<div class="c" style="left:487px;top:512px;width:69px;height:14px;line-height:16px;color:#1c1c1c;text-align:right;padding-right:1.26px;font-size:9.4px;letter-spacing:0.74px;">25</div>
<div class="c" style="left:557px;top:512px;width:87px;height:14px;line-height:16px;color:#1c1c1c;text-align:right;padding-right:1.42px;font-size:9.4px;letter-spacing:0.58px;">277.403.546</div>
<div class="c" style="left:645px;top:512px;width:109px;height:14px;line-height:16px;color:#1c1c1c;text-align:right;padding-right:1.98px;font-size:9.4px;letter-spacing:0.52px;">-354.118</div>
<div class="c" style="left:755px;top:512px;width:139px;height:14px;line-height:16px;color:#1c1c1c;text-align:right;padding-right:1.76px;font-size:9.4px;letter-spacing:0.74px;">0</div>
<div class="c" style="left:895px;top:512px;width:139px;height:14px;line-height:16px;color:#1c1c1c;text-align:right;padding-right:1.76px;font-size:9.4px;letter-spacing:0.74px;">0</div>
<div class="c" style="left:1035px;top:512px;width:139px;height:14px;line-height:16px;color:#1c1c1c;text-align:right;padding-right:1.76px;font-size:9.4px;letter-spacing:0.74px;">0</div>
<div class="c" style="left:1175px;top:512px;width:110px;height:14px;line-height:16px;color:#1c1c1c;text-align:right;padding-right:2.06px;font-size:9.4px;letter-spacing:0.44px;">(357.934)</div>
<div class="c" style="left:1794px;top:512px;width:74px;height:14px;line-height:16px;color:#1c1c1c;text-align:right;padding-right:2px;font-family:'Liberation Sans',sans-serif;font-size:10.7px;line-height:14px;">31/01/2026</div>
<div class="c" style="left:36px;top:527px;width:68px;height:14px;line-height:16px;color:#1c1c1c;padding-left:2px;font-size:9.4px;letter-spacing:0.72px;"><span class="u">AGUSTUS</span></div>
<div class="c" style="left:192px;top:527px;width:79px;height:14px;line-height:16px;color:#1c1c1c;text-align:right;padding-right:1.92px;font-size:9.4px;letter-spacing:0.58px;">207.200.305</div>
<div class="c" style="left:272px;top:527px;width:214px;height:14px;line-height:16px;color:#1c1c1c;text-align:right;padding-right:2.39px;font-size:9.4px;letter-spacing:0.61px;">326.734</div>
<div class="c" style="left:1175px;top:527px;width:110px;height:14px;line-height:16px;color:#1c1c1c;text-align:right;padding-right:5.39px;font-size:9.4px;letter-spacing:0.61px;">326.734</div>
<div class="c" style="left:1286px;top:527px;width:81px;height:14px;line-height:16px;color:#1c1c1c;text-align:right;padding-right:1.35px;font-size:9.4px;letter-spacing:0.15px;">(0)</div>
<div class="c" style="left:1368px;top:527px;width:94px;height:14px;line-height:16px;color:#1c1c1c;text-align:right;padding-right:5.39px;font-size:9.4px;letter-spacing:0.61px;">326.734</div>
<div class="c" style="left:1463px;top:527px;width:75px;height:14px;line-height:16px;color:#1c1c1c;text-align:right;padding-right:5.39px;font-size:9.4px;letter-spacing:0.61px;">326.734</div>
<div class="c" style="left:1539px;top:527px;width:66px;height:14px;line-height:16px;color:#1c1c1c;text-align:right;padding-right:1.5px;font-family:'Liberation Sans',sans-serif;font-size:10.7px;line-height:14px;">15/09/2025</div>
<div class="c" style="left:1606px;top:527px;width:187px;height:14px;line-height:16px;color:#1c1c1c;padding-left:2px;font-family:'Liberation Sans',sans-serif;font-size:10.75px;letter-spacing:-0.02px;line-height:14px;">4B5D55BME2BMADPU</div>
<div class="c" style="left:1794px;top:527px;width:74px;height:14px;line-height:16px;color:#1c1c1c;text-align:right;padding-right:2px;font-family:'Liberation Sans',sans-serif;font-size:10.7px;line-height:14px;">15/09/2025</div>
<div class="c" style="left:36px;top:542px;width:68px;height:14px;line-height:16px;color:#1c1c1c;padding-left:2px;font-size:9.4px;letter-spacing:0.72px;">Agustus-P1</div>
<div class="c" style="left:105px;top:542px;width:86px;height:14px;line-height:16px;color:#1c1c1c;text-align:right;padding-right:1.44px;font-size:9.4px;letter-spacing:0.56px;">39,00</div>
<div class="c" style="left:192px;top:542px;width:79px;height:14px;line-height:16px;color:#1c1c1c;text-align:right;padding-right:1.92px;font-size:9.4px;letter-spacing:0.58px;">184.677.010</div>
<div class="c" style="left:272px;top:542px;width:214px;height:14px;line-height:16px;color:#1c1c1c;text-align:right;padding-right:2.39px;font-size:9.4px;letter-spacing:0.61px;">318.034</div>
<div class="c" style="left:487px;top:542px;width:69px;height:14px;line-height:16px;color:#1c1c1c;text-align:right;padding-right:1.26px;font-size:9.4px;letter-spacing:0.74px;">3</div>
<div class="c" style="left:557px;top:542px;width:87px;height:14px;line-height:16px;color:#1c1c1c;text-align:right;padding-right:1.44px;font-size:9.4px;letter-spacing:0.56px;">30.058.670</div>
<div class="c" style="left:645px;top:542px;width:109px;height:14px;line-height:16px;color:#1c1c1c;text-align:right;padding-right:1.76px;font-size:9.4px;letter-spacing:0.74px;">0</div>
<div class="c" style="left:755px;top:542px;width:139px;height:14px;line-height:16px;color:#1c1c1c;text-align:right;padding-right:1.76px;font-size:9.4px;letter-spacing:0.74px;">0</div>
<div class="c" style="left:895px;top:542px;width:139px;height:14px;line-height:16px;color:#1c1c1c;text-align:right;padding-right:1.76px;font-size:9.4px;letter-spacing:0.74px;">0</div>
<div class="c" style="left:1035px;top:542px;width:139px;height:14px;line-height:16px;color:#1c1c1c;text-align:right;padding-right:1.76px;font-size:9.4px;letter-spacing:0.74px;">0</div>
<div class="c" style="left:1175px;top:542px;width:110px;height:14px;line-height:16px;color:#1c1c1c;text-align:right;padding-right:2.14px;font-size:9.4px;letter-spacing:0.36px;">(8.700)</div>
<div class="c" style="left:1286px;top:542px;width:81px;height:14px;line-height:16px;color:#1c1c1c;text-align:right;padding-right:1.14px;font-size:9.4px;letter-spacing:0.36px;">(8.700)</div>
<div class="c" style="left:1794px;top:542px;width:74px;height:14px;line-height:16px;color:#1c1c1c;text-align:right;padding-right:2px;font-family:'Liberation Sans',sans-serif;font-size:10.7px;line-height:14px;">31/01/2026</div>
<div class="c" style="left:36px;top:557px;width:68px;height:14px;line-height:16px;color:#1c1c1c;padding-left:2px;font-size:9.4px;letter-spacing:0.72px;"><span class="u">SEPTEMBER</span></div>
<div class="c" style="left:192px;top:557px;width:79px;height:14px;line-height:16px;color:#1c1c1c;text-align:right;padding-right:1.92px;font-size:9.4px;letter-spacing:0.58px;">201.454.109</div>
<div class="c" style="left:272px;top:557px;width:214px;height:14px;line-height:16px;color:#1c1c1c;text-align:right;padding-right:2.39px;font-size:9.4px;letter-spacing:0.61px;">265.628</div>
<div class="c" style="left:1175px;top:557px;width:110px;height:14px;line-height:16px;color:#1c1c1c;text-align:right;padding-right:5.39px;font-size:9.4px;letter-spacing:0.61px;">265.628</div>
<div class="c" style="left:1286px;top:557px;width:81px;height:14px;line-height:16px;color:#1c1c1c;text-align:right;padding-right:5.15px;font-size:9.4px;letter-spacing:-0.15px;">-</div>
<div class="c" style="left:1368px;top:557px;width:94px;height:14px;line-height:16px;color:#1c1c1c;text-align:right;padding-right:5.39px;font-size:9.4px;letter-spacing:0.61px;">265.628</div>
<div class="c" style="left:1463px;top:557px;width:75px;height:14px;line-height:16px;color:#1c1c1c;text-align:right;padding-right:5.39px;font-size:9.4px;letter-spacing:0.61px;">265.628</div>
<div class="c" style="left:1539px;top:557px;width:66px;height:14px;line-height:16px;color:#1c1c1c;text-align:right;padding-right:1.5px;font-family:'Liberation Sans',sans-serif;font-size:10.7px;line-height:14px;">15/10/2025</div>
<div class="c" style="left:1606px;top:557px;width:187px;height:14px;line-height:16px;color:#1c1c1c;padding-left:2px;font-family:'Liberation Sans',sans-serif;font-size:10.75px;letter-spacing:-0.02px;line-height:14px;">A61BA4F92F0RG16N</div>
<div class="c" style="left:1794px;top:557px;width:74px;height:14px;line-height:16px;color:#1c1c1c;text-align:right;padding-right:2px;font-family:'Liberation Sans',sans-serif;font-size:10.7px;line-height:14px;">15/10/2025</div>
<div class="c" style="left:36px;top:572px;width:68px;height:14px;line-height:16px;color:#1c1c1c;padding-left:2px;font-size:9.4px;letter-spacing:0.72px;">September-P1</div>
<div class="c" style="left:105px;top:572px;width:86px;height:14px;line-height:16px;color:#1c1c1c;text-align:right;padding-right:1.44px;font-size:9.4px;letter-spacing:0.56px;">39,00</div>
<div class="c" style="left:192px;top:572px;width:79px;height:14px;line-height:16px;color:#1c1c1c;text-align:right;padding-right:1.92px;font-size:9.4px;letter-spacing:0.58px;">197.396.931</div>
<div class="c" style="left:272px;top:572px;width:214px;height:14px;line-height:16px;color:#1c1c1c;text-align:right;padding-right:2.39px;font-size:9.4px;letter-spacing:0.61px;">514.897</div>
<div class="c" style="left:487px;top:572px;width:69px;height:14px;line-height:16px;color:#1c1c1c;text-align:right;padding-right:1.26px;font-size:9.4px;letter-spacing:0.74px;">15</div>
<div class="c" style="left:557px;top:572px;width:87px;height:14px;line-height:16px;color:#1c1c1c;text-align:right;padding-right:1.42px;font-size:9.4px;letter-spacing:0.58px;">149.240.075</div>
<div class="c" style="left:645px;top:572px;width:109px;height:14px;line-height:16px;color:#1c1c1c;text-align:right;padding-right:1.98px;font-size:9.4px;letter-spacing:0.52px;">-249.269</div>
<div class="c" style="left:755px;top:572px;width:139px;height:14px;line-height:16px;color:#1c1c1c;text-align:right;padding-right:1.76px;font-size:9.4px;letter-spacing:0.74px;">0</div>
<div class="c" style="left:895px;top:572px;width:139px;height:14px;line-height:16px;color:#1c1c1c;text-align:right;padding-right:1.76px;font-size:9.4px;letter-spacing:0.74px;">0</div>
<div class="c" style="left:1035px;top:572px;width:139px;height:14px;line-height:16px;color:#1c1c1c;text-align:right;padding-right:1.76px;font-size:9.4px;letter-spacing:0.74px;">0</div>
<div class="c" style="left:1175px;top:572px;width:110px;height:14px;line-height:16px;color:#1c1c1c;text-align:right;padding-right:6.15px;font-size:9.4px;letter-spacing:-0.15px;">-</div>
<div class="c" style="left:1794px;top:572px;width:74px;height:14px;line-height:16px;color:#1c1c1c;text-align:right;padding-right:2px;font-family:'Liberation Sans',sans-serif;font-size:10.7px;line-height:14px;">31/01/2026</div>
<div class="c" style="left:36px;top:587px;width:68px;height:14px;line-height:16px;color:#1c1c1c;padding-left:2px;font-size:9.4px;letter-spacing:0.72px;"><span class="u">OKTOBER</span></div>
<div class="c" style="left:192px;top:587px;width:79px;height:14px;line-height:16px;color:#1c1c1c;text-align:right;padding-right:1.92px;font-size:9.4px;letter-spacing:0.58px;">339.870.270</div>
<div class="c" style="left:272px;top:587px;width:214px;height:14px;line-height:16px;color:#1c1c1c;text-align:right;padding-right:2.39px;font-size:9.4px;letter-spacing:0.61px;">121.939</div>
<div class="c" style="left:1175px;top:587px;width:110px;height:14px;line-height:16px;color:#1c1c1c;text-align:right;padding-right:2.06px;font-size:9.4px;letter-spacing:0.44px;">(121.939)</div>
<div class="c" style="left:1368px;top:587px;width:94px;height:14px;line-height:16px;color:#1c1c1c;text-align:right;padding-right:5.39px;font-size:9.4px;letter-spacing:0.61px;">121.939</div>
<div class="c" style="left:1463px;top:587px;width:75px;height:14px;line-height:16px;color:#1c1c1c;text-align:right;padding-right:5.39px;font-size:9.4px;letter-spacing:0.61px;">121.939</div>
<div class="c" style="left:1539px;top:587px;width:66px;height:14px;line-height:16px;color:#1c1c1c;text-align:right;padding-right:1.5px;font-family:'Liberation Sans',sans-serif;font-size:10.7px;line-height:14px;">14/11/2025</div>
<div class="c" style="left:1606px;top:587px;width:187px;height:14px;line-height:16px;color:#1c1c1c;padding-left:2px;font-family:'Liberation Sans',sans-serif;font-size:10.75px;letter-spacing:-0.02px;line-height:14px;">883e7f5b-0e2f-4568-8cfc-753bd94fb0c1</div>
<div class="c" style="left:1794px;top:587px;width:74px;height:14px;line-height:16px;color:#1c1c1c;text-align:right;padding-right:2px;font-family:'Liberation Sans',sans-serif;font-size:10.7px;line-height:14px;">14/11/2025</div>
<div class="c" style="left:36px;top:602px;width:68px;height:14px;line-height:16px;color:#1c1c1c;padding-left:2px;font-size:9.4px;letter-spacing:0.72px;">Oktober-P1</div>
<div class="c" style="left:105px;top:602px;width:86px;height:14px;line-height:16px;color:#1c1c1c;text-align:right;padding-right:1.44px;font-size:9.4px;letter-spacing:0.56px;">43,00</div>
<div class="c" style="left:192px;top:602px;width:79px;height:14px;line-height:16px;color:#1c1c1c;text-align:right;padding-right:1.92px;font-size:9.4px;letter-spacing:0.58px;">179.581.191</div>
<div class="c" style="left:272px;top:602px;width:214px;height:14px;line-height:16px;color:#1c1c1c;text-align:right;padding-right:2.41px;font-size:9.4px;letter-spacing:0.59px;">75.185</div>
<div class="c" style="left:487px;top:602px;width:69px;height:14px;line-height:16px;color:#1c1c1c;text-align:right;padding-right:1.26px;font-size:9.4px;letter-spacing:0.74px;">18</div>
<div class="c" style="left:557px;top:602px;width:87px;height:14px;line-height:16px;color:#1c1c1c;text-align:right;padding-right:1.44px;font-size:9.4px;letter-spacing:0.56px;">92.802.289</div>
<div class="c" style="left:645px;top:602px;width:109px;height:14px;line-height:16px;color:#1c1c1c;text-align:right;padding-right:1.98px;font-size:9.4px;letter-spacing:0.52px;">-214.317</div>
<div class="c" style="left:755px;top:602px;width:139px;height:14px;line-height:16px;color:#1c1c1c;text-align:right;padding-right:1.76px;font-size:9.4px;letter-spacing:0.74px;">0</div>
<div class="c" style="left:895px;top:602px;width:139px;height:14px;line-height:16px;color:#1c1c1c;text-align:right;padding-right:1.76px;font-size:9.4px;letter-spacing:0.74px;">0</div>
<div class="c" style="left:1035px;top:602px;width:139px;height:14px;line-height:16px;color:#1c1c1c;text-align:right;padding-right:1.76px;font-size:9.4px;letter-spacing:0.74px;">0</div>
<div class="c" style="left:1175px;top:602px;width:110px;height:14px;line-height:16px;color:#1c1c1c;text-align:right;padding-right:2.09px;font-size:9.4px;letter-spacing:0.41px;">(17.193)</div>
<div class="c" style="left:1794px;top:602px;width:74px;height:14px;line-height:16px;color:#1c1c1c;text-align:right;padding-right:2px;font-family:'Liberation Sans',sans-serif;font-size:10.7px;line-height:14px;">31/01/2026</div>
<div class="c" style="left:36px;top:617px;width:68px;height:14px;line-height:16px;color:#1c1c1c;padding-left:2px;font-size:9.4px;letter-spacing:0.72px;"><span class="u">NOVEMBER</span></div>
<div class="c" style="left:192px;top:617px;width:79px;height:14px;line-height:16px;color:#1c1c1c;text-align:right;padding-right:2.5px;font-family:'Liberation Serif',serif;font-weight:bold;font-size:8.8px;letter-spacing:1.42px;">209.924.996</div>
<div class="c" style="left:272px;top:617px;width:214px;height:14px;line-height:16px;color:#1c1c1c;text-align:right;padding-right:3px;font-family:'Liberation Serif',serif;font-weight:bold;font-size:8.8px;letter-spacing:1.42px;">306.333</div>
<div class="c" style="left:557px;top:617px;width:87px;height:14px;line-height:16px;color:#1c1c1c;text-align:right;padding-right:1.44px;font-size:9.4px;letter-spacing:0.56px;">40.669.724</div>
<div class="c" style="left:645px;top:617px;width:109px;height:14px;line-height:16px;color:#1c1c1c;text-align:right;padding-right:1.98px;font-size:9.4px;letter-spacing:0.52px;">-691.035</div>
<div class="c" style="left:1175px;top:617px;width:110px;height:14px;line-height:16px;color:#1c1c1c;text-align:right;padding-right:2.06px;font-size:9.4px;letter-spacing:0.44px;">(506.641)</div>
<div class="c" style="left:1368px;top:617px;width:94px;height:14px;line-height:16px;color:#1c1c1c;text-align:right;padding-right:6.15px;font-size:9.4px;letter-spacing:-0.15px;">-</div>
<div class="c" style="left:1794px;top:617px;width:74px;height:14px;line-height:16px;color:#1c1c1c;text-align:right;padding-right:2px;font-family:'Liberation Sans',sans-serif;font-size:10.7px;line-height:14px;">15/12/2025</div>
<div class="c" style="left:36px;top:632px;width:68px;height:14px;line-height:16px;color:#1c1c1c;padding-left:2px;font-size:9.4px;letter-spacing:0.72px;">November-P1</div>
<div class="c" style="left:105px;top:632px;width:86px;height:14px;line-height:16px;color:#1c1c1c;text-align:right;padding-right:1.44px;font-size:9.4px;letter-spacing:0.56px;">48,00</div>
<div class="c" style="left:192px;top:632px;width:79px;height:14px;line-height:16px;color:#1c1c1c;text-align:right;padding-right:1.92px;font-size:9.4px;letter-spacing:0.58px;">222.098.761</div>
<div class="c" style="left:272px;top:632px;width:214px;height:14px;line-height:16px;color:#1c1c1c;text-align:right;padding-right:2.39px;font-size:9.4px;letter-spacing:0.61px;">306.333</div>
<div class="c" style="left:557px;top:632px;width:87px;height:14px;line-height:16px;color:#1c1c1c;text-align:right;padding-right:1.44px;font-size:9.4px;letter-spacing:0.56px;">28.892.737</div>
<div class="c" style="left:36px;top:647px;width:68px;height:14px;line-height:16px;color:#1c1c1c;padding-left:2px;font-size:9.4px;letter-spacing:0.72px;"><span class="u">DESEMBER</span></div>
<div class="c" style="left:192px;top:647px;width:79px;height:14px;line-height:16px;color:#1c1c1c;text-align:right;padding-right:1.76px;font-size:9.4px;letter-spacing:0.74px;">0</div>
<div class="c" style="left:272px;top:647px;width:214px;height:14px;line-height:16px;color:#1c1c1c;text-align:right;padding-right:2.26px;font-size:9.4px;letter-spacing:0.74px;">0</div>
<div class="c" style="left:1175px;top:647px;width:110px;height:14px;line-height:16px;color:#1c1c1c;text-align:right;padding-right:6.15px;font-size:9.4px;letter-spacing:-0.15px;">-</div>
<div class="c" style="left:1286px;top:647px;width:81px;height:14px;line-height:16px;color:#1c1c1c;text-align:right;padding-right:5.15px;font-size:9.4px;letter-spacing:-0.15px;">-</div>
<div class="c" style="left:1368px;top:647px;width:94px;height:14px;line-height:16px;color:#1c1c1c;text-align:right;padding-right:6.15px;font-size:9.4px;letter-spacing:-0.15px;">-</div>
<div class="abs" style="left:35px;top:286px;width:1px;height:376px;background:#0a0a0a;"></div>
<div class="abs" style="left:104px;top:286px;width:1px;height:376px;background:#0a0a0a;"></div>
<div class="abs" style="left:191px;top:286px;width:1px;height:376px;background:#0a0a0a;"></div>
<div class="abs" style="left:271px;top:286px;width:1px;height:376px;background:#0a0a0a;"></div>
<div class="abs" style="left:486px;top:286px;width:1px;height:376px;background:#0a0a0a;"></div>
<div class="abs" style="left:556px;top:286px;width:1px;height:376px;background:#0a0a0a;"></div>
<div class="abs" style="left:644px;top:286px;width:1px;height:376px;background:#0a0a0a;"></div>
<div class="abs" style="left:754px;top:286px;width:1px;height:376px;background:#0a0a0a;"></div>
<div class="abs" style="left:894px;top:286px;width:1px;height:376px;background:#0a0a0a;"></div>
<div class="abs" style="left:1034px;top:286px;width:1px;height:376px;background:#0a0a0a;"></div>
<div class="abs" style="left:1174px;top:286px;width:1px;height:376px;background:#0a0a0a;"></div>
<div class="abs" style="left:1285px;top:286px;width:1px;height:376px;background:#0a0a0a;"></div>
<div class="abs" style="left:1367px;top:286px;width:1px;height:376px;background:#0a0a0a;"></div>
<div class="abs" style="left:1462px;top:286px;width:1px;height:376px;background:#0a0a0a;"></div>
<div class="abs" style="left:1538px;top:301px;width:1px;height:361px;background:#0a0a0a;"></div>
<div class="abs" style="left:1605px;top:301px;width:1px;height:361px;background:#0a0a0a;"></div>
<div class="abs" style="left:1793px;top:286px;width:1px;height:376px;background:#0a0a0a;"></div>
<div class="abs" style="left:1868px;top:286px;width:1px;height:376px;background:#0a0a0a;"></div>
<div class="abs" style="left:35px;top:286px;width:1834px;height:1px;background:#0a0a0a;"></div>
<div class="abs" style="left:35px;top:316px;width:1834px;height:1px;background:#0a0a0a;"></div>
<div class="abs" style="left:35px;top:331px;width:1834px;height:1px;background:#0a0a0a;"></div>
<div class="abs" style="left:35px;top:346px;width:1834px;height:1px;background:#0a0a0a;"></div>
<div class="abs" style="left:35px;top:361px;width:1834px;height:1px;background:#0a0a0a;"></div>
<div class="abs" style="left:35px;top:376px;width:1834px;height:1px;background:#0a0a0a;"></div>
<div class="abs" style="left:35px;top:391px;width:1834px;height:1px;background:#0a0a0a;"></div>
<div class="abs" style="left:35px;top:406px;width:1834px;height:1px;background:#0a0a0a;"></div>
<div class="abs" style="left:35px;top:421px;width:1834px;height:1px;background:#0a0a0a;"></div>
<div class="abs" style="left:35px;top:436px;width:1834px;height:1px;background:#0a0a0a;"></div>
<div class="abs" style="left:35px;top:451px;width:1834px;height:1px;background:#0a0a0a;"></div>
<div class="abs" style="left:35px;top:466px;width:1834px;height:1px;background:#0a0a0a;"></div>
<div class="abs" style="left:35px;top:481px;width:1834px;height:1px;background:#0a0a0a;"></div>
<div class="abs" style="left:35px;top:496px;width:1834px;height:1px;background:#0a0a0a;"></div>
<div class="abs" style="left:35px;top:511px;width:1834px;height:1px;background:#0a0a0a;"></div>
<div class="abs" style="left:35px;top:526px;width:1834px;height:1px;background:#0a0a0a;"></div>
<div class="abs" style="left:35px;top:541px;width:1834px;height:1px;background:#0a0a0a;"></div>
<div class="abs" style="left:35px;top:556px;width:1834px;height:1px;background:#0a0a0a;"></div>
<div class="abs" style="left:35px;top:571px;width:1834px;height:1px;background:#0a0a0a;"></div>
<div class="abs" style="left:35px;top:586px;width:1834px;height:1px;background:#0a0a0a;"></div>
<div class="abs" style="left:35px;top:601px;width:1834px;height:1px;background:#0a0a0a;"></div>
<div class="abs" style="left:35px;top:616px;width:1834px;height:1px;background:#0a0a0a;"></div>
<div class="abs" style="left:35px;top:631px;width:1834px;height:1px;background:#0a0a0a;"></div>
<div class="abs" style="left:35px;top:646px;width:1834px;height:1px;background:#0a0a0a;"></div>
<div class="abs" style="left:35px;top:661px;width:1834px;height:1px;background:#0a0a0a;"></div>
<div class="abs" style="left:191px;top:301px;width:295px;height:1px;background:#0a0a0a;"></div>
<div class="abs" style="left:1462px;top:301px;width:331px;height:1px;background:#0a0a0a;"></div>
<svg style="left:1175px;top:512px" width="5" height="5" viewBox="0 0 5 5"><path d="M0 0 H4.5 L0 4.5 Z" fill="#1d6b3a"/></svg>
<svg style="left:1175px;top:542px" width="5" height="5" viewBox="0 0 5 5"><path d="M0 0 H4.5 L0 4.5 Z" fill="#1d6b3a"/></svg>
<div class="abs" style="left:555px;top:730px;width:90px;height:17px;box-sizing:border-box;border:2px solid #1b6a40;"></div>
<div class="abs" style="left:642px;top:744px;width:5px;height:5px;background:#1b6a40;border:1px solid #fff;box-sizing:content-box;margin:-1px 0 0 -1px;"></div>
<svg style="left:1904px;top:263px" width="11" height="8" viewBox="0 0 11 8"><path d="M5.5 0.5 L10.5 7.5 H0.5 Z" fill="#8f8f8f"/></svg>
<div class="abs" style="left:1905px;top:276px;width:9px;height:673px;background:#9a9a9a;border-radius:4.5px;"></div>
<svg style="left:1904px;top:968px" width="11" height="8" viewBox="0 0 11 8"><path d="M5.5 7.5 L10.5 0.5 H0.5 Z" fill="#8f8f8f"/></svg>
<div class="abs" style="left:0;top:978px;width:1920px;height:32px;background:#0f0c0b;"></div>
<svg style="left:28px;top:988px" width="7" height="11" viewBox="0 0 7 11"><path d="M6 0.8 L1 5.5 L6 10.2" fill="none" stroke="#5a5654" stroke-width="1.3" stroke-linecap="round" stroke-linejoin="round"/></svg>
<svg style="left:61px;top:988px" width="7" height="11" viewBox="0 0 7 11"><path d="M1 0.8 L6 5.5 L1 10.2" fill="none" stroke="#d8d8d8" stroke-width="1.3" stroke-linecap="round" stroke-linejoin="round"/></svg>
<div class="abs" style="left:116px;top:978px;width:60px;height:28px;background:linear-gradient(180deg,#ffffff 0%,#fff7e6 45%,#fbe6bd 100%);border-radius:0 0 5px 5px;box-shadow:0 0 3px rgba(255,235,190,0.35);"></div>
<svg style="left:112px;top:978px" width="4" height="4" viewBox="0 0 4 4"><path d="M0 0 H4 V4 Q4 0 0 0 Z" fill="#fff"/></svg>
<svg style="left:176px;top:978px" width="4" height="4" viewBox="0 0 4 4"><path d="M4 0 H0 V4 Q0 0 4 0 Z" fill="#fff"/></svg>
<div class="t" style="left:124.5px;top:983.9px;font-size:13.4px;line-height:16px;letter-spacing:-0.530px;color:#1f1f1f;-webkit-text-stroke:0.3px #1f1f1f;">PPH 21</div>
<div class="abs" style="left:124px;top:1000.5px;width:44px;height:2px;background:#2e7d2a;border-radius:1px;"></div>
<div class="abs" style="left:180px;top:985px;width:1px;height:18px;background:#4a4644;"></div>
<div class="t" style="left:194.5px;top:987.4px;font-size:13.4px;line-height:16px;letter-spacing:0.046px;">Karyawan Tetap</div>
<div class="abs" style="left:306px;top:985px;width:1px;height:18px;background:#4a4644;"></div>
<div class="t" style="left:320.0px;top:987.4px;font-size:13.4px;line-height:16px;letter-spacing:0.007px;">A1-Karyawan Resign</div>
<div class="abs" style="left:459px;top:985px;width:1px;height:18px;background:#4a4644;"></div>
<div class="t" style="left:475.0px;top:987.4px;font-size:13.4px;line-height:16px;letter-spacing:0.107px;">Karyawan NIK Tidak Valid</div>
<div class="abs" style="left:647px;top:985px;width:1px;height:18px;background:#4a4644;"></div>
<div class="t" style="left:660.0px;top:987.4px;font-size:13.4px;line-height:16px;letter-spacing:-0.685px;">PPN</div>
<div class="abs" style="left:699px;top:985px;width:1px;height:18px;background:#4a4644;"></div>
<div class="t" style="left:712.0px;top:987.4px;font-size:13.4px;line-height:16px;letter-spacing:-0.195px;">A2</div>
<div class="abs" style="left:741px;top:985px;width:1px;height:18px;background:#4a4644;"></div>
<div class="t" style="left:756.0px;top:987.4px;font-size:13.4px;line-height:16px;letter-spacing:-0.446px;">PREPAID PPH 23</div>
<div class="abs" style="left:872px;top:985px;width:1px;height:18px;background:#4a4644;"></div>
<svg style="left:893px;top:992px" width="11" height="3" viewBox="0 0 11 3"><circle cx="1.5" cy="1.5" r="1.3" fill="#e6e6e6"/><circle cx="5.5" cy="1.5" r="1.3" fill="#e6e6e6"/><circle cx="9.5" cy="1.5" r="1.3" fill="#e6e6e6"/></svg>
<svg style="left:924.5px;top:988px" width="11" height="11" viewBox="0 0 11 11"><path d="M5.5 0 V11 M0 5.5 H11" stroke="#e6e6e6" stroke-width="1.2"/></svg>
<svg style="left:961.5px;top:988.5px" width="3" height="12" viewBox="0 0 3 12"><circle cx="1.5" cy="1.5" r="1.1" fill="#e6e6e6"/><circle cx="1.5" cy="6" r="1.1" fill="#e6e6e6"/><circle cx="1.5" cy="10.5" r="1.1" fill="#e6e6e6"/></svg>
<svg style="left:984px;top:989px" width="7" height="9" viewBox="0 0 7 9"><path d="M0.3 4.5 L6.7 0.3 V8.7 Z" fill="#9a9a9a"/></svg>
<div class="abs" style="left:996px;top:989px;width:851px;height:9px;background:#a3a3a3;border-radius:4.5px;"></div>
<svg style="left:1889px;top:989px" width="7" height="9" viewBox="0 0 7 9"><path d="M6.7 4.5 L0.3 0.3 V8.7 Z" fill="#9a9a9a"/></svg>
<div class="abs" style="left:0;top:1010px;width:1920px;height:22px;background:#131211;border-top:1px solid #2b2928;box-sizing:border-box;"></div>
<div class="t" style="left:11.0px;top:1015.3px;font-size:12px;line-height:14px;letter-spacing:-0.738px;color:#f0f0f0;">Ready</div>
<div class="t" style="left:58.0px;top:1015.3px;font-size:12px;line-height:14px;letter-spacing:-0.392px;color:#f0f0f0;">Calculate</div>
<svg style="left:125px;top:1013.5px" width="15" height="15" viewBox="0 0 15 15"><circle cx="6.5" cy="2.3" r="1.7" fill="none" stroke="#f0f0f0" stroke-width="1"/>
<path d="M1.2 5 L5 5.8 H8 L11.8 5 M5.2 5.8 L5 9 L3 13.2 M7.8 5.8 L8 9 L8.6 10.4" fill="none" stroke="#f0f0f0" stroke-width="2.6" stroke-linecap="round" stroke-linejoin="round"/>
<path d="M1.2 5 L5 5.8 H8 L11.8 5 M5.2 5.8 L5 9 L3 13.2 M7.8 5.8 L8 9 L8.6 10.4" fill="none" stroke="#131211" stroke-width="0.9" stroke-linecap="round" stroke-linejoin="round"/>
<path d="M9.3 10.2 L13.6 14.2 M13.6 10.2 L9.3 14.2" stroke="#f0f0f0" stroke-width="1.1"/></svg>
<div class="t" style="left:143.0px;top:1014.8px;font-size:12px;line-height:14px;letter-spacing:-0.688px;color:#f0f0f0;font-weight:bold;">Accessibility: Investigate</div>
<div class="abs" style="left:1620px;top:1011px;width:40px;height:21px;background:#242322;"></div>
<svg style="left:1633px;top:1014px" width="14" height="13" viewBox="0 0 14 13"><path d="M0.6 0.6 H13.4 V12.4 H0.6 Z M0.6 4.5 H13.4 M0.6 8.5 H13.4 M4.9 0.6 V12.4 M9.1 0.6 V12.4" fill="none" stroke="#f0f0f0" stroke-width="1.3"/></svg>
<svg style="left:1673px;top:1014px" width="14" height="13" viewBox="0 0 14 13"><rect x="0.6" y="0.6" width="12.8" height="11.8" fill="none" stroke="#f0f0f0" stroke-width="1.1"/><rect x="3.2" y="3.2" width="7.6" height="6.6" fill="none" stroke="#f0f0f0" stroke-width="1"/><path d="M5 5.3 H9 M5 7.6 H9" stroke="#f0f0f0" stroke-width="0.9"/></svg>
<svg style="left:1713px;top:1014px" width="14" height="13" viewBox="0 0 14 13"><path d="M0.6 0.6 H13.4 V12.4 H0.6 Z M0.6 7.5 H9.5 V0.6 M4.5 0.6 V7.5" fill="none" stroke="#f0f0f0" stroke-width="1.2"/></svg>
<svg style="left:1746px;top:1021px" width="8" height="2" viewBox="0 0 8 2"><path d="M0 1 H8" stroke="#f0f0f0" stroke-width="1.1"/></svg>
<div class="abs" style="left:1759px;top:1021px;width:100px;height:1px;background:#8a8a8a;"></div>
<div class="abs" style="left:1809px;top:1019px;width:1px;height:5px;background:#8a8a8a;"></div>
<div class="abs" style="left:1791px;top:1016px;width:5px;height:11px;background:#b0b0b0;border-radius:1px;"></div>
<svg style="left:1863.5px;top:1017px" width="9" height="9" viewBox="0 0 9 9"><path d="M4.5 0 V9 M0 4.5 H9" stroke="#f0f0f0" stroke-width="1.1"/></svg>
<div class="t" style="left:1885.0px;top:1015.3px;font-size:11.5px;line-height:14px;letter-spacing:-0.672px;color:#f0f0f0;">70%</div>
<div class="abs" style="left:0;top:1032px;width:1920px;height:48px;background:linear-gradient(90deg,#1f1c1b 0%,#221d1a 24%,#2a201b 34%,#2c211a 55%,#251f1c 66%,#1d2023 76%,#1f2327 88%,#2c2519 95%,#3a2d17 100%);border-top:1px solid #3a3735;box-sizing:border-box;"></div>
<svg style="left:19px;top:1047.5px" width="21" height="21" viewBox="0 0 21 21"><path d="M0.5 9.8 C1.5 4 6 0.8 10.5 0.8 C15 0.8 19.5 4 20.5 9.8 C18.5 8.4 16.5 8.4 15 9.8 C13.5 8.4 11 8.4 10.2 9.8 C8.5 8.4 6.5 8.4 5.2 9.8 C3.8 8.4 2 8.4 0.5 9.8 Z" fill="#86c3fa"/>
<path d="M5.2 9.8 C6.5 8.4 8.5 8.4 10.2 9.8 C11 8.4 13.5 8.4 15 9.8 C16.5 8.4 18.5 8.4 20.5 9.8 C20 8 19 6.5 18 5.5 C14 5 9 6 5.2 9.8 Z" fill="#3f7fd0" opacity="0.75"/>
<path d="M10.4 9.5 V17.5 C10.4 20 7 20 7 17.5" fill="none" stroke="#9a8a9c" stroke-width="1.4" stroke-linecap="round"/></svg>
<div class="abs" style="left:29.5px;top:1038.5px;width:17px;height:17px;border-radius:8.5px;background:#2a1414;"></div>
<div class="abs" style="left:30.5px;top:1039.5px;width:15px;height:15px;border-radius:7.5px;background:#f89aa2;"></div>
<div class="t" style="left:34.9px;top:1040.8px;font-size:11.5px;line-height:14px;color:#3a0508;">5</div>
<div class="t" style="left:50.8px;top:1042.1px;font-size:12px;line-height:14px;letter-spacing:-0.086px;color:#f3f3f3;">Hari hujan yang...</div>
<div class="t" style="left:50.8px;top:1057.8px;font-size:12px;line-height:14px;letter-spacing:-0.653px;color:#d0d0d0;">30°C</div>
<svg style="left:639px;top:1045px" width="24" height="24" viewBox="0 0 24 24"><defs><linearGradient id="wg" x1="0" y1="0" x2="1" y2="1"><stop offset="0" stop-color="#6fd0ff"/><stop offset="1" stop-color="#1f8fe8"/></linearGradient></defs>
<rect x="0" y="0" width="11.3" height="11.3" rx="1" fill="url(#wg)"/><rect x="12.7" y="0" width="11.3" height="11.3" rx="1" fill="url(#wg)"/><rect x="0" y="12.7" width="11.3" height="11.3" rx="1" fill="url(#wg)"/><rect x="12.7" y="12.7" width="11.3" height="11.3" rx="1" fill="url(#wg)"/></svg>
<div class="abs" style="left:675px;top:1040px;width:220px;height:32px;border-radius:16px;background:linear-gradient(90deg,#403734,#473b35);border:1px solid #51463f;box-sizing:border-box;"></div>
<svg style="left:686px;top:1049px" width="15" height="15" viewBox="0 0 15 15"><circle cx="6" cy="6" r="4.8" fill="none" stroke="#f0f0f0" stroke-width="1.5"/><path d="M9.6 9.6 L13.8 13.8" stroke="#f0f0f0" stroke-width="1.6" stroke-linecap="round"/></svg>
<div class="t" style="left:712.0px;top:1048.9px;font-size:13.5px;line-height:16px;letter-spacing:-0.296px;color:#e0e0e0;">Search</div>
<svg style="left:845px;top:1043px" width="46" height="26" viewBox="0 0 46 26"><ellipse cx="24" cy="23" rx="22" ry="2.6" fill="#c8a070"/>
<path d="M10 8 C8 5 9 2 11 1 L13 3 C16 3 18 6 19 8 L32 9 C35 9 36 12 36 15 L36 22 H33 L32 16 L21 16 L20 22 H17 L16 14 C13 13 11 11 10 8 Z" fill="#b8b0c8"/>
<path d="M13 4 L15 9 M17 6 L18 12 M22 9 L22 16 M26 9 L26 16 M30 9 L30 16 M33.5 10 L34 18" stroke="#3a3350" stroke-width="1.3" fill="none"/>
<path d="M10.5 2 L13 5.5" stroke="#3a3350" stroke-width="1.2"/></svg>
<svg style="left:907px;top:1043.5px" width="26" height="24" viewBox="0 0 26 24"><rect x="0.5" y="7.5" width="15" height="15" rx="2" fill="#7d7d7d"/><rect x="7.5" y="1" width="17" height="16" rx="2" fill="#e8e8e8"/><rect x="7.5" y="7.5" width="8" height="9.5" fill="#c4c4c4"/></svg>
<svg style="left:950px;top:1044px" width="26" height="22" viewBox="0 0 26 22"><path d="M0.5 3 C0.5 1.5 1.5 0.8 2.5 0.8 H8 L10.5 3.5 H23 C24.5 3.5 25.2 4.3 25.2 5.5 V8 H0.5 Z" fill="#e8a520"/>
<rect x="0.5" y="5.5" width="24.7" height="16" rx="1.8" fill="#ffd04d"/><rect x="0.5" y="12" width="24.7" height="9.5" rx="1.8" fill="#f7b928"/>
<rect x="5.5" y="14" width="14.5" height="7.5" rx="1" fill="#1a84d8"/></svg>
<div class="abs" style="left:960px;top:1073px;width:6px;height:3px;border-radius:1.5px;background:#8a8a8a;"></div>
<svg style="left:994px;top:1043.5px" width="26" height="26" viewBox="0 0 26 26"><defs><linearGradient id="eg" x1="0" y1="0" x2="1" y2="1"><stop offset="0" stop-color="#2fc6d8"/><stop offset="0.55" stop-color="#1a86d9"/><stop offset="1" stop-color="#0c59a4"/></linearGradient></defs>
<circle cx="13" cy="13" r="12.5" fill="url(#eg)"/>
<path d="M2 12 C3 5 9 1 14 1.2 C20 1.5 25.3 6 25.3 11.5 C25.3 15.5 22 17.5 19 17.5 C16 17.5 15.5 16 16.2 14.8 C17.5 12.5 16 9.5 12 9.5 C7.5 9.5 3.5 12.5 2 12 Z" fill="#49d86a" opacity="0.85"/>
<path d="M8 13 C6.5 19 11 24.5 17.5 24.5 C20 24.5 22 23.5 23.5 22 C20 23 14 22 12 18 C11 16 11.5 14 12.5 13 Z" fill="#0b4a8f"/>
<path d="M12 9.5 C16 9.5 17.5 12.5 16.2 14.8 C15.5 16 16 17.5 19 17.5 C15 19.5 10.5 17 10.5 13.5 C10.5 11.5 11.2 10.3 12 9.5 Z" fill="#1b2838" opacity="0.55"/></svg>
<svg style="left:1039px;top:1043.5px" width="24" height="25" viewBox="0 0 24 25"><path d="M7.5 6 V3.5 C7.5 1.5 9 0.8 10 0.8 H14 C15 0.8 16.5 1.5 16.5 3.5 V6" fill="none" stroke="#2a7fd6" stroke-width="1.6"/>
<path d="M0.8 6 H23.2 V21.5 C23.2 23.3 22 24.2 20.5 24.2 H3.5 C2 24.2 0.8 23.3 0.8 21.5 Z" fill="#f3f3f3"/>
<rect x="7" y="10" width="4.5" height="4.5" fill="#f25022"/><rect x="12.5" y="10" width="4.5" height="4.5" fill="#7fba00"/><rect x="7" y="15.5" width="4.5" height="4.5" fill="#00a4ef"/><rect x="12.5" y="15.5" width="4.5" height="4.5" fill="#ffb900"/></svg>
<svg style="left:1082px;top:1043.5px" width="26" height="26" viewBox="0 0 26 26"><path d="M13 0.8 C19.8 0.8 25.2 6.2 25.2 13 C25.2 19.8 19.8 25.2 13 25.2 C10.8 25.2 8.7 24.6 6.9 23.6 L0.8 25.2 L2.5 19.3 C1.4 17.4 0.8 15.3 0.8 13 C0.8 6.2 6.2 0.8 13 0.8 Z" fill="#25d366"/>
<path d="M13 3 C18.5 3 23 7.5 23 13 C23 18.5 18.5 23 13 23 C11 23 9.2 22.4 7.6 21.4 L4 22.3 L5 18.8 C3.8 17.2 3 15.2 3 13 C3 7.5 7.5 3 13 3 Z" fill="#1f2a25"/>
<path d="M9.3 7.5 C9.8 7.5 10.2 7.6 10.4 8.2 L11.2 10.2 C11.4 10.6 11.2 11 10.9 11.4 L10.3 12.1 C11.2 13.8 12.5 15 14.2 15.8 L15 14.9 C15.3 14.5 15.7 14.5 16.1 14.7 L18 15.6 C18.5 15.9 18.5 16.2 18.4 16.7 C18.1 18 17 18.7 15.8 18.6 C11.8 18.2 7.9 14.4 7.5 10.4 C7.4 9.2 8 7.6 9.3 7.5 Z" fill="#25d366"/></svg>
<svg style="left:1126.5px;top:1043.5px" width="25" height="25" viewBox="0 0 25 25"><circle cx="12.5" cy="12.5" r="12.2" fill="#fff"/>
<path d="M12.5 12.5 L1.95 6.4 A12.2 12.2 0 0 1 23.05 6.4 Z" fill="#ea4335"/>
<path d="M12.5 12.5 L23.05 6.4 A12.2 12.2 0 0 1 12.5 24.7 Z" fill="#fbbc04"/>
<path d="M12.5 12.5 L12.5 24.7 A12.2 12.2 0 0 1 1.95 6.4 Z" fill="#34a853"/>
<path d="M12.5 6.9 H22.8 A12.2 12.2 0 0 0 2.2 6.9 Z" fill="#ea4335"/>
<circle cx="12.5" cy="12.5" r="5.6" fill="#fff"/><circle cx="12.5" cy="12.5" r="4.4" fill="#4285f4"/></svg>
<div class="abs" style="left:1136px;top:1073px;width:6px;height:3px;border-radius:1.5px;background:#8a8a8a;"></div>
<svg style="left:1171px;top:1044px" width="24" height="24" viewBox="0 0 24 24"><circle cx="12" cy="12" r="12" fill="#e8344e"/><path d="M7.2 18 L12 5.5 L16.8 18" fill="none" stroke="#fff" stroke-width="2.4" stroke-linejoin="round" stroke-linecap="round"/></svg>
<svg style="left:1215px;top:1044px" width="24" height="24" viewBox="0 0 24 24"><rect x="0" y="0" width="24" height="24" rx="1.5" fill="#ef443b"/><path d="M9 6.5 L14.5 12 L9 17.5 L3.5 12 Z" fill="#fff"/><path d="M14.2 6.5 L19.7 12 L14.2 17.5 L12.6 15.9 L16.5 12 L12.6 8.1 Z" fill="#fff"/></svg>
<div class="abs" style="left:1252px;top:1037px;width:38px;height:39px;border-radius:4px;background:#282422;border:1px solid #353130;box-sizing:border-box;"></div>
<svg style="left:1259px;top:1044px" width="22" height="24" viewBox="0 0 22 24"><defs><linearGradient id="xg" x1="0" y1="0" x2="0.6" y2="1"><stop offset="0" stop-color="#6fd35a"/><stop offset="0.5" stop-color="#2fa84f"/><stop offset="1" stop-color="#136b38"/></linearGradient></defs>
<rect x="4" y="0.5" width="17.5" height="22" rx="3" fill="url(#xg)"/>
<rect x="12.5" y="0.5" width="9" height="7" rx="2" fill="#8be07a" opacity="0.7"/>
<rect x="4" y="11" width="17.5" height="11.5" rx="2.5" fill="#15703c" opacity="0.75"/>
<rect x="0" y="10.5" width="11.5" height="11.5" rx="2.2" fill="#0f6a38"/>
<path d="M3.3 13.6 L8.2 19 M8.2 13.6 L3.3 19" stroke="#fff" stroke-width="1.5" fill="none"/></svg>
<div class="abs" style="left:1264px;top:1073px;width:14px;height:3px;border-radius:1.5px;background:#4cc2ff;"></div>
<svg style="left:1696.5px;top:1052px" width="11" height="7" viewBox="0 0 11 7"><path d="M0.8 6 L5.5 1.2 L10.2 6" fill="none" stroke="#f3f3f3" stroke-width="1.5" stroke-linecap="round" stroke-linejoin="round"/></svg>
<svg style="left:1726px;top:1048px" width="17" height="15" viewBox="0 0 17 15"><path d="M4 12.5 C1.5 12.5 0.5 11 0.5 9.5 C0.5 7.8 1.8 6.6 3.3 6.6 C3.6 4.2 5.5 3 7.5 3 C9.3 3 10.6 3.9 11.3 5.2 C13.8 5 16 6.5 16 9 C16 11 14.6 12.5 12.8 12.5 Z" fill="#8a8a8a"/><path d="M1.5 0.8 L15 14.2" stroke="#c8c8c8" stroke-width="1.2"/></svg>
<svg style="left:1758px;top:1048px" width="17" height="16" viewBox="0 0 17 16"><path d="M11 1 H1 V11 H11 M4 15 H9.5 M6.5 11 V15" fill="none" stroke="#f3f3f3" stroke-width="1.3"/><rect x="11.5" y="0.8" width="4.2" height="5.5" rx="0.8" fill="none" stroke="#f3f3f3" stroke-width="1.1"/><path d="M13.6 6.5 V15" stroke="#f3f3f3" stroke-width="1.2"/></svg>
<svg style="left:1781.5px;top:1049px" width="17" height="14" viewBox="0 0 17 14"><path d="M0.8 4.8 H3.8 L7.5 1.2 V12.8 L3.8 9.2 H0.8 Z" fill="none" stroke="#f3f3f3" stroke-width="1.2" stroke-linejoin="round"/><path d="M9.8 4.5 C11 5.8 11 8.2 9.8 9.5 M12 2.6 C14 5 14 9 12 11.4 M14.2 1 C17 4.5 17 9.5 14.2 13" fill="none" stroke="#f3f3f3" stroke-width="1.1" stroke-linecap="round"/></svg>
<div class="t" style="left:1849.0px;top:1041.8px;font-size:12px;line-height:14px;letter-spacing:-0.406px;color:#f3f3f3;">15:24</div>
<div class="t" style="left:1816.0px;top:1057.8px;font-size:12px;line-height:14px;letter-spacing:0.094px;color:#f3f3f3;">31/01/2026</div>
<svg style="left:1885px;top:1049px" width="14" height="15" viewBox="0 0 14 15"><path d="M7 0.8 C4 0.8 2.5 3 2.5 5.5 V9 L0.8 11.5 H13.2 L11.5 9 V5.5 C11.5 3 10 0.8 7 0.8 Z" fill="none" stroke="#f3f3f3" stroke-width="1.2" stroke-linejoin="round"/><path d="M5.3 12 C5.5 14.2 8.5 14.2 8.7 12" fill="none" stroke="#f3f3f3" stroke-width="1.1"/></svg>
</div>
</body></html>
